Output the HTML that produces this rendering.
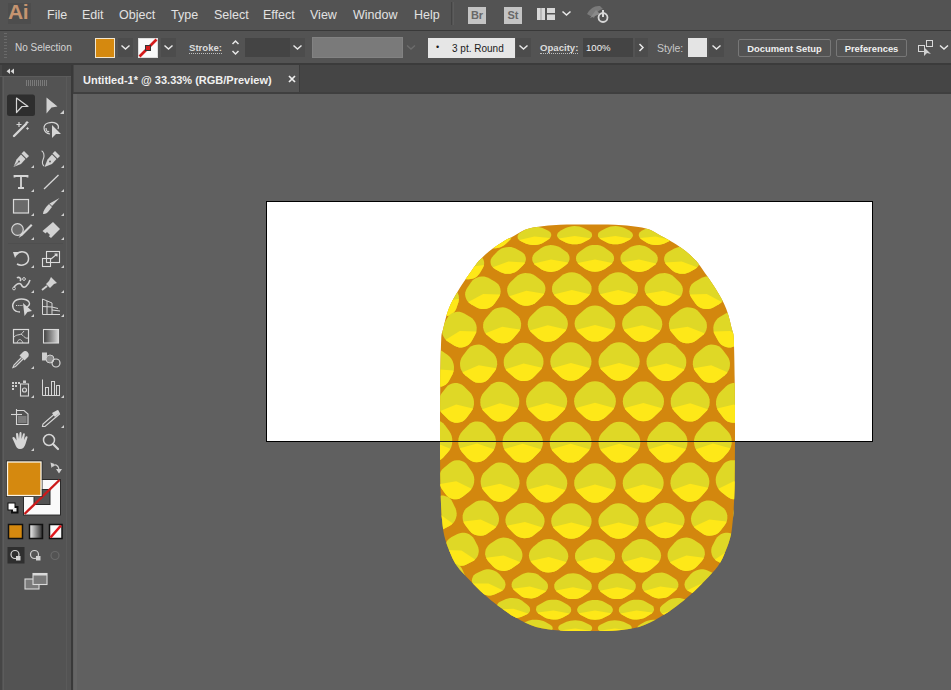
<!DOCTYPE html>
<html><head><meta charset="utf-8">
<style>
*{box-sizing:border-box}
html,body{margin:0;padding:0;width:951px;height:690px;overflow:hidden;background:#5f5f5f;font-family:"Liberation Sans",sans-serif}
.abs{position:absolute}
#menubar{left:0;top:0;width:951px;height:30px;background:#535353}
#mbline{left:0;top:30px;width:951px;height:1px;background:#393939}
#ctrl{left:0;top:31px;width:951px;height:32px;background:#535353}
#ctline{left:0;top:63px;width:951px;height:2px;background:#3b3b3b}
#tabbar{left:73px;top:65px;width:878px;height:28px;background:#454545}
#tab{left:74px;top:65px;width:226px;height:27px;background:#535353;border-right:1px solid #3c3c3c}
#tabline{left:73px;top:92px;width:878px;height:2px;background:#3f3f3f}
#tools{left:0;top:65px;width:71px;height:625px;background:#535353}
#toolshead{left:0;top:65px;width:71px;height:12px;background:#3e3e3e}
#sep{left:71px;top:65px;width:2px;height:625px;background:#393939}
#canvas{left:73px;top:94px;width:878px;height:596px;background:#606060}
.menu{top:8px;font-size:12.5px;color:#e2e2e2;white-space:nowrap}
.lbl{font-size:9.6px;font-weight:bold;color:#dcdcdc;white-space:nowrap}
.dk{background:#4c4c4c}
.inp{background:#444444}
.btn{border:1px solid #777;border-radius:2px;background:#535353;font-size:9.4px;font-weight:bold;color:#f0f0f0;text-align:center;white-space:nowrap}
.ul{border-bottom:1px dotted #bdbdbd}
</style></head><body>
<div id="canvas" class="abs"></div>
<div id="menubar" class="abs"></div>
<div id="mbline" class="abs"></div>
<div id="ctrl" class="abs"></div>
<div id="ctline" class="abs"></div>
<div id="tabbar" class="abs"></div>
<div id="tab" class="abs"></div>
<div id="tabline" class="abs"></div>
<div id="tools" class="abs"></div>
<div id="toolshead" class="abs"></div>
<div id="sep" class="abs"></div>
<div class="abs" style="left:74px;top:94px;width:3px;height:596px;background:#656565"></div>

<!-- menu -->
<div class="abs" style="left:8px;top:3px;width:23px;height:21px;background:#4d4d4d"></div><div class="abs" style="left:8px;top:0px;font-size:21px;line-height:24px;font-weight:bold;color:#c59470;letter-spacing:-0.5px">Ai</div>
<div class="abs menu" style="left:47px">File</div>
<div class="abs menu" style="left:82px">Edit</div>
<div class="abs menu" style="left:119px">Object</div>
<div class="abs menu" style="left:171px">Type</div>
<div class="abs menu" style="left:214px">Select</div>
<div class="abs menu" style="left:263px">Effect</div>
<div class="abs menu" style="left:310px">View</div>
<div class="abs menu" style="left:353px">Window</div>
<div class="abs menu" style="left:414px">Help</div>
<div class="abs" style="left:451px;top:2px;width:1px;height:23px;background:#444"></div><div class="abs" style="left:453px;top:2px;width:1px;height:23px;background:#5c5c5c"></div>
<div class="abs" style="left:468px;top:7px;width:18px;height:17px;background:#c4c4c4;color:#686868;font-size:11px;font-weight:bold;text-align:center;line-height:17px">Br</div>
<div class="abs" style="left:504px;top:7px;width:18px;height:17px;background:#c4c4c4;color:#686868;font-size:11px;font-weight:bold;text-align:center;line-height:17px">St</div>
<svg class="abs" style="left:530px;top:0" width="90" height="30" viewBox="530 0 90 30">
 <rect x="537" y="8" width="8" height="12" fill="#d8d8d8"/>
 <rect x="540.5" y="8" width="1" height="12" fill="#9a9a9a"/>
 <rect x="547" y="8" width="8" height="5" fill="#d8d8d8"/>
 <rect x="547" y="14.5" width="8" height="5.5" fill="#d8d8d8"/>
 <path d="M562.5,11.5 L566.5,15 L570.5,11.5" stroke="#e8e8e8" stroke-width="1.6" fill="none"/>
 <path d="M587,14 Q592,5 600,6 L603,9 Q597,10 594,18 Z" fill="#7a7a7a"/>
 <path d="M590,18 L596,10 L600,14 Z" fill="#8a8a8a"/>
 <circle cx="603" cy="17.5" r="4.5" stroke="#d8d8d8" stroke-width="1.8" fill="none"/>
 <rect x="602" y="10" width="2" height="7" fill="#d8d8d8"/>
</svg>

<!-- control bar -->
<svg class="abs" style="left:0;top:31px" width="10" height="32"><g fill="#6a6a6a"><rect x="4" y="2" width="3" height="1"/><rect x="4" y="5" width="3" height="1"/><rect x="4" y="8" width="3" height="1"/><rect x="4" y="11" width="3" height="1"/><rect x="4" y="14" width="3" height="1"/><rect x="4" y="17" width="3" height="1"/><rect x="4" y="20" width="3" height="1"/><rect x="4" y="23" width="3" height="1"/><rect x="4" y="26" width="3" height="1"/></g></svg>
<div class="abs" style="left:15px;top:42px;font-size:10px;color:#d4d4d4;white-space:nowrap">No Selection</div>
<div class="abs" style="left:95px;top:38px;width:20px;height:20px;background:#d5890f;border:1px solid #f2e6cf"></div>
<div class="abs dk" style="left:118px;top:38px;width:15px;height:19px"></div>
<div class="abs" style="left:138px;top:38px;width:20px;height:20px;background:#fafafa;border:1px solid #ddd"></div>
<svg class="abs" style="left:138px;top:38px" width="20" height="20"><path d="M1.5,18.5 L18.5,1.5" stroke="#d41b1b" stroke-width="2.6"/><rect x="7.5" y="7.5" width="5" height="5" fill="#d41b1b" stroke="#333" stroke-width="1"/></svg>
<div class="abs dk" style="left:161px;top:38px;width:15px;height:19px"></div>
<div class="abs lbl ul" style="left:189px;top:42px;line-height:11px">Stroke:</div>
<div class="abs inp" style="left:245px;top:38px;width:45px;height:19px"></div>
<div class="abs dk" style="left:290px;top:38px;width:15px;height:19px"></div>
<div class="abs" style="left:312px;top:37px;width:91px;height:21px;background:#7a7a7a;border:1px solid #828282"></div>
<div class="abs" style="left:428px;top:38px;width:87px;height:20px;background:#e6e6e6;font-size:10px;color:#1a1a1a;white-space:nowrap;line-height:21px"><span style="position:absolute;left:8px;top:-1px;font-size:9px">&#8226;</span><span style="position:absolute;left:24px">3 pt. Round</span></div>
<div class="abs dk" style="left:516px;top:38px;width:15px;height:19px"></div>
<div class="abs lbl ul" style="left:540px;top:42px;line-height:11px">Opacity:</div>
<div class="abs inp" style="left:583px;top:38px;width:50px;height:19px;font-size:9.6px;color:#f0f0f0;line-height:19px;padding-left:3px">100%</div>
<div class="abs dk" style="left:635px;top:38px;width:13px;height:19px"></div>
<div class="abs" style="left:657px;top:42px;font-size:10.5px;color:#c8c8c8;white-space:nowrap">Style:</div>
<div class="abs" style="left:688px;top:38px;width:19px;height:19px;background:#e4e4e4"></div>
<div class="abs dk" style="left:709px;top:38px;width:15px;height:19px"></div>
<div class="abs btn" style="left:738px;top:39px;width:93px;height:18px;line-height:17px">Document Setup</div>
<div class="abs btn" style="left:836px;top:39px;width:71px;height:18px;line-height:17px">Preferences</div>
<svg class="abs" style="left:0;top:31px" width="951" height="32" viewBox="0 31 951 32">
 <g stroke="#e8e8e8" stroke-width="1.5" fill="none">
  <path d="M121.5,45.5 L125.5,49 L129.5,45.5"/>
  <path d="M164.5,45.5 L168.5,49 L172.5,45.5"/>
  <path d="M293.5,45.5 L297.5,49 L301.5,45.5"/>
  <path d="M519.5,45.5 L523.5,49 L527.5,45.5"/>
  <path d="M712.5,45.5 L716.5,49 L720.5,45.5"/>
  <path d="M940,45.5 L944,49 L948,45.5"/>
  <path d="M639.5,44 L643,47.5 L639.5,51"/>
  <path d="M232.5,44 L235.5,41 L238.5,44"/>
  <path d="M232.5,51 L235.5,54 L238.5,51"/>
 </g>
 <path d="M407,45.5 L411,49 L415,45.5" stroke="#6c6c6c" stroke-width="1.5" fill="none"/>
 <g stroke="#d8d8d8" stroke-width="1" fill="none">
  <rect x="918.5" y="45.5" width="6" height="6"/>
  <rect x="926.5" y="40.5" width="6" height="6"/>
 </g>
 <path d="M924,47 L924,56 L927,53 L931,54 Z" fill="#cfcfcf"/>
</svg>

<!-- tab -->
<div class="abs" style="left:83px;top:74px;font-size:11px;font-weight:bold;color:#f0f0f0;white-space:nowrap">Untitled-1* @ 33.33% (RGB/Preview)</div>
<svg class="abs" style="left:287px;top:74px" width="10" height="10"><path d="M2,2 L8,8 M8,2 L2,8" stroke="#eeeeee" stroke-width="1.7"/></svg>

<svg class="abs" style="left:0;top:0" width="73" height="690" viewBox="0 0 73 690">
 <!-- panel borders -->
 <rect x="0" y="65" width="2" height="625" fill="#464646"/>
 <rect x="3" y="77" width="1" height="613" fill="#5c5c5c"/>
 <rect x="66" y="77" width="1" height="613" fill="#5a5a5a"/>
 <rect x="0" y="76" width="71" height="1" fill="#5c5c5c"/>
 <!-- header -->
 <path d="M10,68.5 L6.5,71.2 L10,74 Z M14,68.5 L10.5,71.2 L14,74 Z" fill="#d8d8d8"/>
 <!-- grip -->
 <g fill="#7a7a7a">
  <rect x="26" y="80" width="1" height="6"/><rect x="28" y="80" width="1" height="6"/><rect x="30" y="80" width="1" height="6"/><rect x="32" y="80" width="1" height="6"/><rect x="34" y="80" width="1" height="6"/><rect x="36" y="80" width="1" height="6"/><rect x="38" y="80" width="1" height="6"/><rect x="40" y="80" width="1" height="6"/><rect x="42" y="80" width="1" height="6"/><rect x="44" y="80" width="1" height="6"/><rect x="46" y="80" width="1" height="6"/>
 </g>
 <!-- active selection bg -->
 <rect x="7" y="94.5" width="28" height="21.5" rx="2.5" fill="#2e2e2e"/>
 <g fill="none" stroke="#d6d6d6" stroke-width="1.2" stroke-linejoin="round">
  <!-- selection -->
  <path d="M16.5,98 L28,106.5 L22,106.5 L16.5,112.5 Z"/>
 </g>
 <!-- direct selection -->
 <path d="M46.5,97.5 L57.5,106.5 L51.5,107.5 L46.5,113.5 Z" fill="#d2d2d2"/>
 <g fill="#cfcfcf">
  <!-- more-tools triangles -->
  <path d="M64,110 L64,114 L60,114 Z"/>
  <path d="M34,165 L34,168 L31,168 Z"/><path d="M64,165 L64,168 L61,168 Z"/>
  <path d="M34,189 L34,192 L31,192 Z"/><path d="M64,189 L64,192 L61,192 Z"/>
  <path d="M34,213 L34,216 L31,216 Z"/><path d="M64,213 L64,216 L61,216 Z"/>
  <path d="M34,237 L34,240 L31,240 Z"/><path d="M64,237 L64,240 L61,240 Z"/>
  <path d="M34,265 L34,268 L31,268 Z"/><path d="M64,265 L64,268 L61,268 Z"/>
  <path d="M34,290 L34,293 L31,293 Z"/><path d="M64,290 L64,293 L61,293 Z"/>
  <path d="M34,314 L34,317 L31,317 Z"/><path d="M64,314 L64,317 L61,317 Z"/>
  <path d="M34,366 L34,369 L31,369 Z"/>
  <path d="M34,395 L34,398 L31,398 Z"/><path d="M64,395 L64,398 L61,398 Z"/>
  <path d="M64,425 L64,428 L61,428 Z"/>
  <path d="M34,448 L34,451 L31,451 Z"/>
 </g>
 <!-- magic wand -->
 <g stroke="#d6d6d6" fill="none">
  <path d="M14,136 L26,124" stroke-width="2.4" stroke-linecap="round"/>
  <path d="M19,122 L19,127 M16.5,124.5 L21.5,124.5" stroke-width="1.2"/>
  <path d="M27,121 L27,124 M25.5,122.5 L28.5,122.5" stroke-width="1"/>
  <circle cx="27.5" cy="128.5" r="0.8" fill="#d6d6d6"/>
 </g>
 <!-- lasso -->
 <g stroke="#d6d6d6" fill="none" stroke-width="1.2">
  <path d="M50,134 C43,133 42,125 48,123 C54,121 60,124 58,129"/>
  <path d="M46,128 C46,131 48,133 49,131"/>
 </g>
 <path d="M52,125 L61,134 L56,134 L52,138 Z" fill="#d6d6d6"/>
 <!-- pen -->
 <g fill="#d2d2d2">
  <path d="M24,151 L29,156 L26.5,158.5 L21.5,153.5 Z"/>
  <path d="M21,154.5 L25.5,159 L21,164 L13.5,167 L16.5,159.5 Z"/>
 </g>
 <circle cx="19" cy="161.5" r="0.9" fill="#535353"/>
 <path d="M14,166.5 L18.5,162" stroke="#535353" stroke-width="0.8"/>
 <!-- curvature pen -->
 <g fill="#d2d2d2">
  <path d="M55,151 L60,156 L57.5,158.5 L52.5,153.5 Z"/>
  <path d="M52,154.5 L56.5,159 L52,164 L44.5,167 L47.5,159.5 Z"/>
 </g>
 <circle cx="50" cy="161.5" r="0.9" fill="#535353"/>
 <path d="M44,166 C40,162 44,160 44,156 C44,152 42,151 41.5,151" stroke="#d2d2d2" stroke-width="1.1" fill="none"/>
 <!-- type -->
 <path d="M14.5,177.5 L14.5,176 L27.5,176 L27.5,177.5 M21,176 L21,188 M18,188 L24,188" stroke="#d6d6d6" stroke-width="1.8" fill="none"/>
 <!-- line -->
 <path d="M44,189 L58.5,175" stroke="#d6d6d6" stroke-width="1.3"/>
 <!-- rectangle -->
 <rect x="13.5" y="199.5" width="15" height="13.5" fill="#6a6a6a" stroke="#dadada" stroke-width="1.2"/>
 <!-- paintbrush -->
 <path d="M59.5,198 L52,206 L49.5,203.5 Z" fill="#d2d2d2"/>
 <path d="M49,204 L52,207 L48,212 C46,214 44,214 43,214 C43,211 45,208 49,204 Z" fill="#d2d2d2"/>
 <!-- shaper -->
 <circle cx="17.5" cy="229.5" r="5.8" fill="#6a6a6a" stroke="#d6d6d6" stroke-width="1.2"/>
 <path d="M31,224 L21,234 L18.5,238 L22.5,235.5 L32.5,225.5 Z" fill="#d6d6d6"/>
 <!-- eraser -->
 <path d="M53,222 L60,229 L51,238 L42.5,231 Z" fill="#d2d2d2"/>
 <path d="M47,232 L50,235 L48,237 L45,234 Z" fill="#535353"/>
 <!-- separator -->
 <rect x="8" y="243" width="55" height="1" fill="#4e4e4e"/>
 <!-- rotate -->
 <path d="M16,255 C20,250 28,251 28.5,258 C29,264 22,267 17,264" stroke="#d6d6d6" stroke-width="1.5" fill="none"/>
 <path d="M13,252 L18.5,252 L15,258 Z" fill="#d6d6d6"/>
 <!-- scale -->
 <g stroke="#dcdcdc" stroke-width="1.1" fill="none">
  <rect x="46.5" y="251.5" width="13" height="11"/>
  <rect x="42.5" y="258.5" width="8" height="8"/>
  <path d="M51,259 L57,254 M54.5,254 L57,254 L57,256.5"/>
 </g>
 <!-- width tool -->
 <g stroke="#d2d2d2" stroke-width="1.6" fill="none">
  <path d="M14,287 C18,282 21,283 22,286 C24,289 28,286 30,280"/>
  <path d="M17,278 C19,276 22,279 20,281"/>
 </g>
 <circle cx="14" cy="288.5" r="1.4" stroke="#d2d2d2" stroke-width="1" fill="none"/>
 <circle cx="24" cy="279" r="1.4" stroke="#d2d2d2" stroke-width="1" fill="none"/>
 <!-- puppet pin -->
 <path d="M51,277 L57,283 L54,284 L50,288 L46,284 L49,281 Z" fill="#d2d2d2"/>
 <path d="M47,286 L42,290" stroke="#d2d2d2" stroke-width="1.8"/>
 <!-- shape builder -->
 <path d="M20,312 C13,312 11,306 14,302 C17,298 26,298 29,302 C31,305 27,307 25,308" stroke="#d6d6d6" stroke-width="1.3" fill="none"/>
 <path d="M16,305.5 L23,305.5" stroke="#d6d6d6" stroke-width="1.2" stroke-dasharray="1.2,1"/>
 <path d="M23,303 L32,311 L27.5,312 L24.5,316 Z" fill="#d6d6d6"/>
 <!-- perspective grid -->
 <g stroke="#d6d6d6" stroke-width="1" fill="none">
  <path d="M42.5,299 L42.5,314.5 L60,314.5"/>
  <path d="M42.5,299 L52,303 L52,314.5 M42.5,306.5 L52,307 M47,301 L47,314.5"/>
  <path d="M52,310 L60,311 M52,307 L58,308.5"/>
 </g>
 <!-- mesh -->
 <rect x="13.5" y="329.5" width="15" height="13.5" fill="none" stroke="#dadada" stroke-width="1.2"/>
 <path d="M14,337 C18,333 20,337 24,331 M17,343 C18,339 21,338 23,343 M21,334 C24,336 25,339 28,338" stroke="#d0d0d0" stroke-width="1" fill="none"/>
 <!-- gradient -->
 <defs><linearGradient id="gg" x1="0" x2="1"><stop offset="0" stop-color="#3e3e3e"/><stop offset="1" stop-color="#d8d8d8"/></linearGradient>
 <linearGradient id="gb" x1="0" x2="1"><stop offset="0" stop-color="#f4f4f4"/><stop offset="1" stop-color="#2a2a2a"/></linearGradient></defs>
 <rect x="43.5" y="329.5" width="15" height="13.5" fill="url(#gg)" stroke="#dadada" stroke-width="1.1"/>
 <!-- eyedropper -->
 <path d="M27.5,352 C29.5,354 29,356 27.5,357.5 L24.5,360.5 L19.5,355.5 L22.5,352.5 C24,351 26,350.5 27.5,352 Z" fill="#d2d2d2"/>
 <path d="M21.5,357.5 L14,365 L13,367.5 L15.5,366.5 L23,359" stroke="#d2d2d2" stroke-width="1.2" fill="none"/>
 <!-- blend -->
 <rect x="42" y="352.5" width="5" height="8" fill="#cfcfcf"/>
 <circle cx="50" cy="359" r="4" fill="#8a8a8a" stroke="#cfcfcf" stroke-width="1"/>
 <circle cx="56" cy="363" r="4" fill="none" stroke="#d8d8d8" stroke-width="1.2"/>
 <!-- symbol sprayer -->
 <g fill="#cfcfcf">
  <rect x="12" y="382" width="2" height="2"/><rect x="15" y="382" width="2" height="2"/><rect x="18" y="382" width="2" height="2"/>
  <rect x="12" y="385" width="2" height="2"/><rect x="15" y="385" width="2" height="2"/>
  <rect x="12" y="388" width="2" height="2"/>
  <rect x="23" y="380.5" width="3" height="2.5"/>
 </g>
 <rect x="20.5" y="384" width="8" height="12" fill="none" stroke="#d6d6d6" stroke-width="1.1"/>
 <circle cx="24.5" cy="390" r="2" fill="none" stroke="#d6d6d6" stroke-width="1.2"/>
 <!-- graph -->
 <path d="M42.5,379.5 L42.5,395.5 L60,395.5" stroke="#d6d6d6" stroke-width="1" fill="none"/>
 <g fill="none" stroke="#d6d6d6" stroke-width="1"><rect x="45.5" y="387.5" width="3" height="8"/><rect x="51.5" y="381.5" width="3" height="14"/><rect x="56.5" y="385.5" width="3" height="10"/></g>
 <!-- artboard -->
 <g stroke="#d6d6d6" stroke-width="1.1" fill="none">
  <path d="M16.5,409 L16.5,424.5 L28,424.5 L28,414 L24,410.5 L16.5,410.5"/>
  <path d="M11,414.5 L22,414.5"/>
 </g>
 <path d="M18,416 L26.5,416 L26.5,423 L18,423 Z" fill="#7c7c7c"/>
 <!-- slice/knife -->
 <path d="M58,411 L59.5,414 L45,426.5 L42.5,426.5 L43,424 Z" fill="none" stroke="#d6d6d6" stroke-width="1.2"/>
 <path d="M52,413 L57.5,410 L59.5,413 L55,417 Z" fill="#d6d6d6"/>
 <!-- hand -->
 <path d="M15,444 L12.5,438.5 C12,437 14,436.5 15,438 L16.5,440.5 L16,434 C16,432.5 18,432.5 18.2,434 L19,439 L19.5,433 C19.7,431.5 21.5,431.5 21.5,433 L21.5,439 L23,434 C23.3,432.7 25,433 24.8,434.5 L24,440 L25.5,437 C26,435.8 27.8,436.2 27.5,437.5 L25.5,444 C24.5,447 23,449 20,449 C17.5,449 16,447 15,444 Z" fill="#d6d6d6"/>
 <!-- zoom -->
 <circle cx="49" cy="440" r="5.5" fill="none" stroke="#d6d6d6" stroke-width="1.5"/>
 <path d="M53,444 L58,449" stroke="#d6d6d6" stroke-width="2.2" stroke-linecap="round"/>
 <!-- fill & stroke -->
 <rect x="23.5" y="479.5" width="37" height="35.5" fill="none" stroke="#2a2a2a" stroke-width="1"/>
 <path d="M24,480 L60,480 L60,514.5 L24,514.5 Z M34,489.5 L34,504.5 L50,504.5 L50,489.5 Z" fill="#fafafa" fill-rule="evenodd"/>
 <rect x="34" y="489.5" width="16" height="15" fill="none" stroke="#2a2a2a" stroke-width="1"/>
 <path d="M24.5,514 L59.5,480" stroke="#cc1a1a" stroke-width="2.4"/>
 <rect x="6.5" y="461" width="35.5" height="35.5" fill="none" stroke="#2a2a2a" stroke-width="1"/>
 <rect x="7.5" y="462" width="33.5" height="33.5" fill="#d5890f" stroke="#fbf3e3" stroke-width="1.3"/>
 <path d="M52.5,466.5 C55,463.5 58,465 59,469" stroke="#d0d0d0" stroke-width="1.2" fill="none"/>
 <path d="M50.5,462.5 L54.5,464 L51.5,468 Z M56,469 L62,469 L59,473.5 Z" fill="#d0d0d0"/>
 <rect x="11.5" y="506.5" width="6.5" height="6.5" fill="#111" stroke="#111" stroke-width="1"/>
 <rect x="8" y="503" width="7" height="7" fill="#fff" stroke="#111" stroke-width="1"/>
 <rect x="13" y="508" width="3.5" height="3.5" fill="#eee"/>
 <!-- color/gradient/none -->
 <rect x="8.5" y="524.5" width="14" height="14" fill="#d5890f" stroke="#111" stroke-width="1.5"/>
 <rect x="29.5" y="524.5" width="13" height="14" fill="url(#gb)" stroke="#111" stroke-width="1.5"/>
 <rect x="49.5" y="524.5" width="12.5" height="14" fill="#fafafa" stroke="#111" stroke-width="1.5"/>
 <path d="M50.5,537.5 L61,525.5" stroke="#e0161b" stroke-width="2.6"/>
 <!-- draw modes -->
 <rect x="7.5" y="547" width="17" height="16.5" fill="#2f2f2f"/>
 <circle cx="15" cy="554.5" r="4" fill="none" stroke="#d6d6d6" stroke-width="1.2"/>
 <rect x="16" y="556" width="4.5" height="4.5" fill="#d6d6d6"/>
 <circle cx="34.5" cy="554.5" r="4" fill="none" stroke="#d0d0d0" stroke-width="1.2"/>
 <rect x="36" y="556" width="4.5" height="4.5" fill="#d0d0d0"/>
 <circle cx="55" cy="555.5" r="4" fill="none" stroke="#6a6a6a" stroke-width="1.2"/>
 <!-- screen mode -->
 <rect x="25" y="579" width="14" height="10" fill="#7a7a7a" stroke="#dadada" stroke-width="1.1"/>
 <rect x="33" y="573.5" width="14" height="11" fill="#7a7a7a" stroke="#dadada" stroke-width="1.1"/>
 <rect x="33" y="573.5" width="14" height="2" fill="#dadada"/>
</svg>


<!-- artboard -->
<div class="abs" style="left:266px;top:201px;width:607px;height:241px;background:#fff;border:1px solid #000"></div>

<svg class="abs" style="left:0;top:0" width="951" height="690" viewBox="0 0 951 690">
<defs>
<clipPath id="shp"><path d="M587.5,224.5C596.7,224.5 605.4,224.2 615.0,224.8C624.6,225.4 637.4,226.4 645.0,228.2C652.6,230.0 656.0,233.3 660.8,235.7C665.5,238.1 669.3,240.1 673.5,242.7C677.7,245.3 682.4,248.6 686.1,251.5C689.8,254.4 693.4,258.1 695.5,260.3C697.6,262.5 695.6,259.8 699.0,264.6C702.4,269.4 711.3,281.6 715.8,289.0C720.3,296.4 723.5,301.9 726.2,308.7C728.9,315.5 730.7,324.4 732.0,329.6C733.3,334.8 733.3,331.6 733.8,340.0C734.2,348.4 734.5,365.0 734.7,380.0C734.9,395.0 735.0,413.3 735.0,430.0C735.0,446.7 734.9,466.7 734.7,480.0C734.5,493.3 734.0,503.3 733.7,510.0C733.4,516.7 733.3,516.0 732.8,520.3C732.3,524.5 732.0,530.4 730.8,535.5C729.6,540.6 727.8,545.7 725.7,550.8C723.6,555.9 721.5,561.0 718.0,566.0C714.5,571.0 709.5,575.8 705.0,580.5C700.5,585.2 695.7,590.0 691.0,594.3C686.3,598.5 682.0,602.1 676.7,606.0C671.4,609.9 665.6,614.1 659.3,617.6C653.0,621.1 646.4,624.9 639.0,627.0C631.6,629.1 623.6,629.8 615.0,630.5C606.4,631.2 596.7,631.0 587.5,631.0C578.3,631.0 568.6,631.2 560.0,630.5C551.4,629.8 543.4,629.1 536.0,627.0C528.6,624.9 522.0,621.1 515.7,617.6C509.4,614.1 503.6,609.9 498.3,606.0C493.0,602.1 488.7,598.5 484.0,594.3C479.3,590.0 474.5,585.2 470.0,580.5C465.5,575.8 460.4,571.0 457.0,566.0C453.6,561.0 451.4,555.9 449.3,550.8C447.2,545.7 445.4,540.6 444.2,535.5C443.0,530.4 442.7,524.5 442.2,520.3C441.7,516.0 441.6,516.7 441.3,510.0C441.0,503.3 440.5,493.3 440.3,480.0C440.1,466.7 440.0,446.7 440.0,430.0C440.0,413.3 440.1,395.0 440.3,380.0C440.5,365.0 440.8,348.4 441.2,340.0C441.6,331.6 441.7,334.8 443.0,329.6C444.3,324.4 446.1,315.5 448.8,308.7C451.5,301.9 454.7,296.4 459.2,289.0C463.7,281.6 472.6,269.4 476.0,264.6C479.4,259.8 477.4,262.5 479.5,260.3C481.6,258.1 485.2,254.4 488.9,251.5C492.6,248.6 497.3,245.3 501.5,242.7C505.7,240.1 509.5,238.1 514.2,235.7C519.0,233.3 522.4,230.0 530.0,228.2C537.6,226.4 550.4,225.4 560.0,224.8C569.6,224.2 578.3,224.5 587.5,224.5Z"/></clipPath>
<path id="t" d="M-0.477,-0.823Q-0.300,-1.000 -0.050,-1.000L0.050,-1.000Q0.300,-1.000 0.477,-0.823L0.823,-0.477Q1.000,-0.300 1.000,-0.050L1.000,0.050Q1.000,0.300 0.823,0.477L0.477,0.823Q0.300,1.000 0.050,1.000L-0.050,1.000Q-0.300,1.000 -0.477,0.823L-0.823,0.477Q-1.000,0.300 -1.000,0.050L-1.000,-0.050Q-1.000,-0.300 -0.823,-0.477Z" fill="#dfd826"/>
<clipPath id="lc" clipPathUnits="userSpaceOnUse"><path d="M-2,2 L-2,0.660 L0,0.08 L2,0.660 L2,2Z"/></clipPath>
<g id="tl"><path d="M-0.477,-0.823Q-0.300,-1.000 -0.050,-1.000L0.050,-1.000Q0.300,-1.000 0.477,-0.823L0.823,-0.477Q1.000,-0.300 1.000,-0.050L1.000,0.050Q1.000,0.300 0.823,0.477L0.477,0.823Q0.300,1.000 0.050,1.000L-0.050,1.000Q-0.300,1.000 -0.477,0.823L-0.823,0.477Q-1.000,0.300 -1.000,0.050L-1.000,-0.050Q-1.000,-0.300 -0.823,-0.477Z" fill="#dfd826"/><path d="M-0.477,-0.823Q-0.300,-1.000 -0.050,-1.000L0.050,-1.000Q0.300,-1.000 0.477,-0.823L0.823,-0.477Q1.000,-0.300 1.000,-0.050L1.000,0.050Q1.000,0.300 0.823,0.477L0.477,0.823Q0.300,1.000 0.050,1.000L-0.050,1.000Q-0.300,1.000 -0.477,0.823L-0.823,0.477Q-1.000,0.300 -1.000,0.050L-1.000,-0.050Q-1.000,-0.300 -0.823,-0.477Z" fill="#fee818" clip-path="url(#lc)"/></g>
</defs>
<path d="M587.5,224.5C596.7,224.5 605.4,224.2 615.0,224.8C624.6,225.4 637.4,226.4 645.0,228.2C652.6,230.0 656.0,233.3 660.8,235.7C665.5,238.1 669.3,240.1 673.5,242.7C677.7,245.3 682.4,248.6 686.1,251.5C689.8,254.4 693.4,258.1 695.5,260.3C697.6,262.5 695.6,259.8 699.0,264.6C702.4,269.4 711.3,281.6 715.8,289.0C720.3,296.4 723.5,301.9 726.2,308.7C728.9,315.5 730.7,324.4 732.0,329.6C733.3,334.8 733.3,331.6 733.8,340.0C734.2,348.4 734.5,365.0 734.7,380.0C734.9,395.0 735.0,413.3 735.0,430.0C735.0,446.7 734.9,466.7 734.7,480.0C734.5,493.3 734.0,503.3 733.7,510.0C733.4,516.7 733.3,516.0 732.8,520.3C732.3,524.5 732.0,530.4 730.8,535.5C729.6,540.6 727.8,545.7 725.7,550.8C723.6,555.9 721.5,561.0 718.0,566.0C714.5,571.0 709.5,575.8 705.0,580.5C700.5,585.2 695.7,590.0 691.0,594.3C686.3,598.5 682.0,602.1 676.7,606.0C671.4,609.9 665.6,614.1 659.3,617.6C653.0,621.1 646.4,624.9 639.0,627.0C631.6,629.1 623.6,629.8 615.0,630.5C606.4,631.2 596.7,631.0 587.5,631.0C578.3,631.0 568.6,631.2 560.0,630.5C551.4,629.8 543.4,629.1 536.0,627.0C528.6,624.9 522.0,621.1 515.7,617.6C509.4,614.1 503.6,609.9 498.3,606.0C493.0,602.1 488.7,598.5 484.0,594.3C479.3,590.0 474.5,585.2 470.0,580.5C465.5,575.8 460.4,571.0 457.0,566.0C453.6,561.0 451.4,555.9 449.3,550.8C447.2,545.7 445.4,540.6 444.2,535.5C443.0,530.4 442.7,524.5 442.2,520.3C441.7,516.0 441.6,516.7 441.3,510.0C441.0,503.3 440.5,493.3 440.3,480.0C440.1,466.7 440.0,446.7 440.0,430.0C440.0,413.3 440.1,395.0 440.3,380.0C440.5,365.0 440.8,348.4 441.2,340.0C441.6,331.6 441.7,334.8 443.0,329.6C444.3,324.4 446.1,315.5 448.8,308.7C451.5,301.9 454.7,296.4 459.2,289.0C463.7,281.6 472.6,269.4 476.0,264.6C479.4,259.8 477.4,262.5 479.5,260.3C481.6,258.1 485.2,254.4 488.9,251.5C492.6,248.6 497.3,245.3 501.5,242.7C505.7,240.1 509.5,238.1 514.2,235.7C519.0,233.3 522.4,230.0 530.0,228.2C537.6,226.4 550.4,225.4 560.0,224.8C569.6,224.2 578.3,224.5 587.5,224.5Z" fill="#d3870e"/>
<g clip-path="url(#shp)">
<g transform="translate(430.5,256.3) rotate(-42.4)"><path d="M-6.2,-7.2L-4.8,-8.0L-3.4,-8.6L-1.7,-9.0L0.0,-9.1L0.0,-9.1L1.7,-9.0L3.4,-8.6L4.8,-8.0L6.2,-7.2L9.5,-4.7L10.6,-3.6L11.4,-2.5L11.9,-1.3L12.1,0.0L12.1,0.0L11.9,1.3L11.4,2.5L10.6,3.6L9.5,4.7L6.2,7.2L4.8,8.0L3.4,8.6L1.7,9.0L0.0,9.1L0.0,9.1L-1.7,9.0L-3.4,8.6L-4.8,8.0L-6.2,7.2L-9.5,4.7L-10.6,3.6L-11.4,2.5L-11.9,1.3L-12.1,0.0L-12.1,0.0L-11.9,-1.3L-11.4,-2.5L-10.6,-3.6L-9.5,-4.7Z" fill="#dfd826"/><path d="M11.0,3.1L10.6,3.6L9.5,4.7L6.2,7.2L4.8,8.0L3.4,8.6L1.7,9.0L0.0,9.1L0.0,9.1L-1.7,9.0L-3.4,8.6L-4.8,8.0L-6.2,7.2L-9.5,4.7L-10.6,3.6L-11.0,3.1L0.0,0.7Z" fill="#fee818"/></g>
<g transform="translate(461.1,245.7) rotate(-26.8)"><path d="M-7.3,-7.2L-5.7,-8.0L-3.9,-8.6L-2.0,-9.0L0.0,-9.1L0.0,-9.1L2.0,-9.0L3.9,-8.6L5.7,-8.0L7.3,-7.2L11.2,-4.7L12.5,-3.6L13.4,-2.5L14.0,-1.3L14.2,0.0L14.2,0.0L14.0,1.3L13.4,2.5L12.5,3.6L11.2,4.7L7.3,7.2L5.7,8.0L3.9,8.6L2.0,9.0L0.0,9.1L0.0,9.1L-2.0,9.0L-3.9,8.6L-5.7,8.0L-7.3,7.2L-11.2,4.7L-12.5,3.6L-13.4,2.5L-14.0,1.3L-14.2,0.0L-14.2,0.0L-14.0,-1.3L-13.4,-2.5L-12.5,-3.6L-11.2,-4.7Z" fill="#dfd826"/><path d="M12.9,3.1L12.5,3.6L11.2,4.7L7.3,7.2L5.7,8.0L3.9,8.6L2.0,9.0L0.0,9.1L0.0,9.1L-2.0,9.0L-3.9,8.6L-5.7,8.0L-7.3,7.2L-11.2,4.7L-12.5,3.6L-12.9,3.1L0.0,0.7Z" fill="#fee818"/></g>
<g transform="translate(496.1,238.9) rotate(-13.2)"><path d="M-8.1,-7.2L-6.3,-8.0L-4.4,-8.6L-2.3,-9.0L0.0,-9.1L0.0,-9.1L2.3,-9.0L4.4,-8.6L6.3,-8.0L8.1,-7.2L12.5,-4.7L13.9,-3.6L15.0,-2.5L15.6,-1.3L15.8,0.0L15.8,0.0L15.6,1.3L15.0,2.5L13.9,3.6L12.5,4.7L8.1,7.2L6.3,8.0L4.4,8.6L2.3,9.0L0.0,9.1L0.0,9.1L-2.3,9.0L-4.4,8.6L-6.3,8.0L-8.1,7.2L-12.5,4.7L-13.9,3.6L-15.0,2.5L-15.6,1.3L-15.8,0.0L-15.8,0.0L-15.6,-1.3L-15.0,-2.5L-13.9,-3.6L-12.5,-4.7Z" fill="#dfd826"/><path d="M14.4,3.1L13.9,3.6L12.5,4.7L8.1,7.2L6.3,8.0L4.4,8.6L2.3,9.0L0.0,9.1L0.0,9.1L-2.3,9.0L-4.4,8.6L-6.3,8.0L-8.1,7.2L-12.5,4.7L-13.9,3.6L-14.4,3.1L0.0,0.7Z" fill="#fee818"/></g>
<g transform="translate(534.4,235.9) rotate(-4.1)"><path d="M-8.7,-7.2L-6.8,-8.0L-4.7,-8.6L-2.4,-9.0L0.0,-9.1L0.0,-9.1L2.4,-9.0L4.7,-8.6L6.8,-8.0L8.7,-7.2L13.3,-4.7L14.9,-3.6L16.0,-2.5L16.7,-1.3L16.9,0.0L16.9,0.0L16.7,1.3L16.0,2.5L14.9,3.6L13.3,4.7L8.7,7.2L6.8,8.0L4.7,8.6L2.4,9.0L0.0,9.1L0.0,9.1L-2.4,9.0L-4.7,8.6L-6.8,8.0L-8.7,7.2L-13.3,4.7L-14.9,3.6L-16.0,2.5L-16.7,1.3L-16.9,0.0L-16.9,0.0L-16.7,-1.3L-16.0,-2.5L-14.9,-3.6L-13.3,-4.7Z" fill="#dfd826"/><path d="M15.4,3.1L14.9,3.6L13.3,4.7L8.7,7.2L6.8,8.0L4.7,8.6L2.4,9.0L0.0,9.1L0.0,9.1L-2.4,9.0L-4.7,8.6L-6.8,8.0L-8.7,7.2L-13.3,4.7L-14.9,3.6L-15.4,3.1L0.0,0.7Z" fill="#fee818"/></g>
<g transform="translate(574.6,235.2) rotate(-0.3)"><path d="M-9.0,-7.2L-7.0,-8.0L-4.9,-8.6L-2.5,-9.0L0.0,-9.1L0.0,-9.1L2.5,-9.0L4.9,-8.6L7.0,-8.0L9.0,-7.2L13.8,-4.7L15.4,-3.6L16.6,-2.5L17.3,-1.3L17.5,0.0L17.5,0.0L17.3,1.3L16.6,2.5L15.4,3.6L13.8,4.7L9.0,7.2L7.0,8.0L4.9,8.6L2.5,9.0L0.0,9.1L0.0,9.1L-2.5,9.0L-4.9,8.6L-7.0,8.0L-9.0,7.2L-13.8,4.7L-15.4,3.6L-16.6,2.5L-17.3,1.3L-17.5,0.0L-17.5,0.0L-17.3,-1.3L-16.6,-2.5L-15.4,-3.6L-13.8,-4.7Z" fill="#dfd826"/><path d="M15.9,3.1L15.4,3.6L13.8,4.7L9.0,7.2L7.0,8.0L4.9,8.6L2.5,9.0L0.0,9.1L0.0,9.1L-2.5,9.0L-4.9,8.6L-7.0,8.0L-9.0,7.2L-13.8,4.7L-15.4,3.6L-15.9,3.1L0.0,0.7Z" fill="#fee818"/></g>
<g transform="translate(615.4,235.2) rotate(0.3)"><path d="M-9.0,-7.2L-7.0,-8.0L-4.9,-8.6L-2.5,-9.0L0.0,-9.1L0.0,-9.1L2.5,-9.0L4.9,-8.6L7.0,-8.0L9.0,-7.2L13.8,-4.7L15.4,-3.6L16.6,-2.5L17.3,-1.3L17.5,0.0L17.5,0.0L17.3,1.3L16.6,2.5L15.4,3.6L13.8,4.7L9.0,7.2L7.0,8.0L4.9,8.6L2.5,9.0L0.0,9.1L0.0,9.1L-2.5,9.0L-4.9,8.6L-7.0,8.0L-9.0,7.2L-13.8,4.7L-15.4,3.6L-16.6,2.5L-17.3,1.3L-17.5,0.0L-17.5,0.0L-17.3,-1.3L-16.6,-2.5L-15.4,-3.6L-13.8,-4.7Z" fill="#dfd826"/><path d="M15.9,3.1L15.4,3.6L13.8,4.7L9.0,7.2L7.0,8.0L4.9,8.6L2.5,9.0L0.0,9.1L0.0,9.1L-2.5,9.0L-4.9,8.6L-7.0,8.0L-9.0,7.2L-13.8,4.7L-15.4,3.6L-15.9,3.1L0.0,0.7Z" fill="#fee818"/></g>
<g transform="translate(655.6,235.9) rotate(4.1)"><path d="M-8.7,-7.2L-6.8,-8.0L-4.7,-8.6L-2.4,-9.0L0.0,-9.1L0.0,-9.1L2.4,-9.0L4.7,-8.6L6.8,-8.0L8.7,-7.2L13.3,-4.7L14.9,-3.6L16.0,-2.5L16.7,-1.3L16.9,0.0L16.9,0.0L16.7,1.3L16.0,2.5L14.9,3.6L13.3,4.7L8.7,7.2L6.8,8.0L4.7,8.6L2.4,9.0L0.0,9.1L0.0,9.1L-2.4,9.0L-4.7,8.6L-6.8,8.0L-8.7,7.2L-13.3,4.7L-14.9,3.6L-16.0,2.5L-16.7,1.3L-16.9,0.0L-16.9,0.0L-16.7,-1.3L-16.0,-2.5L-14.9,-3.6L-13.3,-4.7Z" fill="#dfd826"/><path d="M15.4,3.1L14.9,3.6L13.3,4.7L8.7,7.2L6.8,8.0L4.7,8.6L2.4,9.0L0.0,9.1L0.0,9.1L-2.4,9.0L-4.7,8.6L-6.8,8.0L-8.7,7.2L-13.3,4.7L-14.9,3.6L-15.4,3.1L0.0,0.7Z" fill="#fee818"/></g>
<g transform="translate(693.9,238.9) rotate(13.2)"><path d="M-8.1,-7.2L-6.3,-8.0L-4.4,-8.6L-2.3,-9.0L0.0,-9.1L0.0,-9.1L2.3,-9.0L4.4,-8.6L6.3,-8.0L8.1,-7.2L12.5,-4.7L13.9,-3.6L15.0,-2.5L15.6,-1.3L15.8,0.0L15.8,0.0L15.6,1.3L15.0,2.5L13.9,3.6L12.5,4.7L8.1,7.2L6.3,8.0L4.4,8.6L2.3,9.0L0.0,9.1L0.0,9.1L-2.3,9.0L-4.4,8.6L-6.3,8.0L-8.1,7.2L-12.5,4.7L-13.9,3.6L-15.0,2.5L-15.6,1.3L-15.8,0.0L-15.8,0.0L-15.6,-1.3L-15.0,-2.5L-13.9,-3.6L-12.5,-4.7Z" fill="#dfd826"/><path d="M14.4,3.1L13.9,3.6L12.5,4.7L8.1,7.2L6.3,8.0L4.4,8.6L2.3,9.0L0.0,9.1L0.0,9.1L-2.3,9.0L-4.4,8.6L-6.3,8.0L-8.1,7.2L-12.5,4.7L-13.9,3.6L-14.4,3.1L0.0,0.7Z" fill="#fee818"/></g>
<g transform="translate(728.9,245.7) rotate(26.8)"><path d="M-7.3,-7.2L-5.7,-8.0L-3.9,-8.6L-2.0,-9.0L0.0,-9.1L0.0,-9.1L2.0,-9.0L3.9,-8.6L5.7,-8.0L7.3,-7.2L11.2,-4.7L12.5,-3.6L13.4,-2.5L14.0,-1.3L14.2,0.0L14.2,0.0L14.0,1.3L13.4,2.5L12.5,3.6L11.2,4.7L7.3,7.2L5.7,8.0L3.9,8.6L2.0,9.0L0.0,9.1L0.0,9.1L-2.0,9.0L-3.9,8.6L-5.7,8.0L-7.3,7.2L-11.2,4.7L-12.5,3.6L-13.4,2.5L-14.0,1.3L-14.2,0.0L-14.2,0.0L-14.0,-1.3L-13.4,-2.5L-12.5,-3.6L-11.2,-4.7Z" fill="#dfd826"/><path d="M12.9,3.1L12.5,3.6L11.2,4.7L7.3,7.2L5.7,8.0L3.9,8.6L2.0,9.0L0.0,9.1L0.0,9.1L-2.0,9.0L-3.9,8.6L-5.7,8.0L-7.3,7.2L-11.2,4.7L-12.5,3.6L-12.9,3.1L0.0,0.7Z" fill="#fee818"/></g>
<g transform="translate(432.7,276.1) rotate(-36.7)"><path d="M-7.3,-10.6L-5.7,-11.8L-4.0,-12.7L-2.1,-13.2L0.0,-13.4L0.0,-13.4L2.1,-13.2L4.0,-12.7L5.7,-11.8L7.3,-10.6L11.3,-6.9L12.6,-5.4L13.5,-3.7L14.1,-1.9L14.3,0.0L14.3,0.0L14.1,1.9L13.5,3.7L12.6,5.4L11.3,6.9L7.3,10.6L5.7,11.8L4.0,12.7L2.1,13.2L0.0,13.4L0.0,13.4L-2.1,13.2L-4.0,12.7L-5.7,11.8L-7.3,10.6L-11.3,6.9L-12.6,5.4L-13.5,3.7L-14.1,1.9L-14.3,0.0L-14.3,0.0L-14.1,-1.9L-13.5,-3.7L-12.6,-5.4L-11.3,-6.9Z" fill="#dfd826"/><path d="M13.0,4.6L12.6,5.4L11.3,6.9L7.3,10.6L5.7,11.8L4.0,12.7L2.1,13.2L0.0,13.4L0.0,13.4L-2.1,13.2L-4.0,12.7L-5.7,11.8L-7.3,10.6L-11.3,6.9L-12.6,5.4L-13.0,4.6L-0.0,1.1Z" fill="#fee818"/></g>
<g transform="translate(468.4,265.9) rotate(-20.8)"><path d="M-8.4,-10.6L-6.5,-11.8L-4.5,-12.7L-2.4,-13.2L0.0,-13.4L0.0,-13.4L2.4,-13.2L4.5,-12.7L6.5,-11.8L8.4,-10.6L12.9,-6.9L14.4,-5.4L15.4,-3.7L16.1,-1.9L16.3,0.0L16.3,0.0L16.1,1.9L15.4,3.7L14.4,5.4L12.9,6.9L8.4,10.6L6.5,11.8L4.5,12.7L2.4,13.2L0.0,13.4L0.0,13.4L-2.4,13.2L-4.5,12.7L-6.5,11.8L-8.4,10.6L-12.9,6.9L-14.4,5.4L-15.4,3.7L-16.1,1.9L-16.3,0.0L-16.3,0.0L-16.1,-1.9L-15.4,-3.7L-14.4,-5.4L-12.9,-6.9Z" fill="#dfd826"/><path d="M14.9,4.6L14.4,5.4L12.9,6.9L8.4,10.6L6.5,11.8L4.5,12.7L2.4,13.2L0.0,13.4L0.0,13.4L-2.4,13.2L-4.5,12.7L-6.5,11.8L-8.4,10.6L-12.9,6.9L-14.4,5.4L-14.9,4.6L0.0,1.1Z" fill="#fee818"/></g>
<g transform="translate(508.2,260.4) rotate(-8.5)"><path d="M-9.1,-10.6L-7.1,-11.8L-5.0,-12.7L-2.6,-13.2L0.0,-13.4L0.0,-13.4L2.6,-13.2L5.0,-12.7L7.1,-11.8L9.1,-10.6L14.0,-6.9L15.7,-5.4L16.9,-3.7L17.6,-1.9L17.8,0.0L17.8,0.0L17.6,1.9L16.9,3.7L15.7,5.4L14.0,6.9L9.1,10.6L7.1,11.8L5.0,12.7L2.6,13.2L0.0,13.4L0.0,13.4L-2.6,13.2L-5.0,12.7L-7.1,11.8L-9.1,10.6L-14.0,6.9L-15.7,5.4L-16.9,3.7L-17.6,1.9L-17.8,0.0L-17.8,0.0L-17.6,-1.9L-16.9,-3.7L-15.7,-5.4L-14.0,-6.9Z" fill="#dfd826"/><path d="M16.2,4.6L15.7,5.4L14.0,6.9L9.1,10.6L7.1,11.8L5.0,12.7L2.6,13.2L0.0,13.4L0.0,13.4L-2.6,13.2L-5.0,12.7L-7.1,11.8L-9.1,10.6L-14.0,6.9L-15.7,5.4L-16.2,4.6L0.0,1.1Z" fill="#fee818"/></g>
<g transform="translate(550.9,258.5) rotate(-1.7)"><path d="M-9.6,-10.6L-7.5,-11.8L-5.2,-12.7L-2.7,-13.2L0.0,-13.4L0.0,-13.4L2.7,-13.2L5.2,-12.7L7.5,-11.8L9.6,-10.6L14.8,-6.9L16.5,-5.4L17.7,-3.7L18.5,-1.9L18.7,0.0L18.7,0.0L18.5,1.9L17.7,3.7L16.5,5.4L14.8,6.9L9.6,10.6L7.5,11.8L5.2,12.7L2.7,13.2L0.0,13.4L0.0,13.4L-2.7,13.2L-5.2,12.7L-7.5,11.8L-9.6,10.6L-14.8,6.9L-16.5,5.4L-17.7,3.7L-18.5,1.9L-18.7,0.0L-18.7,0.0L-18.5,-1.9L-17.7,-3.7L-16.5,-5.4L-14.8,-6.9Z" fill="#dfd826"/><path d="M17.1,4.6L16.5,5.4L14.8,6.9L9.6,10.6L7.5,11.8L5.2,12.7L2.7,13.2L0.0,13.4L0.0,13.4L-2.7,13.2L-5.2,12.7L-7.5,11.8L-9.6,10.6L-14.8,6.9L-16.5,5.4L-17.1,4.6L0.0,1.1Z" fill="#fee818"/></g>
<g transform="translate(595.0,258.3) rotate(0.0)"><path d="M-9.8,-10.6L-7.6,-11.8L-5.3,-12.7L-2.8,-13.2L0.0,-13.4L0.0,-13.4L2.8,-13.2L5.3,-12.7L7.6,-11.8L9.8,-10.6L15.0,-6.9L16.8,-5.4L18.0,-3.7L18.8,-1.9L19.0,0.0L19.0,0.0L18.8,1.9L18.0,3.7L16.8,5.4L15.0,6.9L9.8,10.6L7.6,11.8L5.3,12.7L2.8,13.2L0.0,13.4L0.0,13.4L-2.8,13.2L-5.3,12.7L-7.6,11.8L-9.8,10.6L-15.0,6.9L-16.8,5.4L-18.0,3.7L-18.8,1.9L-19.0,0.0L-19.0,0.0L-18.8,-1.9L-18.0,-3.7L-16.8,-5.4L-15.0,-6.9Z" fill="#dfd826"/><path d="M17.4,4.6L16.8,5.4L15.0,6.9L9.8,10.6L7.6,11.8L5.3,12.7L2.8,13.2L0.0,13.4L0.0,13.4L-2.8,13.2L-5.3,12.7L-7.6,11.8L-9.8,10.6L-15.0,6.9L-16.8,5.4L-17.4,4.6L0.0,1.1Z" fill="#fee818"/></g>
<g transform="translate(639.1,258.5) rotate(1.7)"><path d="M-9.6,-10.6L-7.5,-11.8L-5.2,-12.7L-2.7,-13.2L0.0,-13.4L0.0,-13.4L2.7,-13.2L5.2,-12.7L7.5,-11.8L9.6,-10.6L14.8,-6.9L16.5,-5.4L17.7,-3.7L18.5,-1.9L18.7,0.0L18.7,0.0L18.5,1.9L17.7,3.7L16.5,5.4L14.8,6.9L9.6,10.6L7.5,11.8L5.2,12.7L2.7,13.2L0.0,13.4L0.0,13.4L-2.7,13.2L-5.2,12.7L-7.5,11.8L-9.6,10.6L-14.8,6.9L-16.5,5.4L-17.7,3.7L-18.5,1.9L-18.7,0.0L-18.7,0.0L-18.5,-1.9L-17.7,-3.7L-16.5,-5.4L-14.8,-6.9Z" fill="#dfd826"/><path d="M17.1,4.6L16.5,5.4L14.8,6.9L9.6,10.6L7.5,11.8L5.2,12.7L2.7,13.2L0.0,13.4L0.0,13.4L-2.7,13.2L-5.2,12.7L-7.5,11.8L-9.6,10.6L-14.8,6.9L-16.5,5.4L-17.1,4.6L0.0,1.1Z" fill="#fee818"/></g>
<g transform="translate(681.8,260.4) rotate(8.5)"><path d="M-9.1,-10.6L-7.1,-11.8L-5.0,-12.7L-2.6,-13.2L0.0,-13.4L0.0,-13.4L2.6,-13.2L5.0,-12.7L7.1,-11.8L9.1,-10.6L14.0,-6.9L15.7,-5.4L16.9,-3.7L17.6,-1.9L17.8,0.0L17.8,0.0L17.6,1.9L16.9,3.7L15.7,5.4L14.0,6.9L9.1,10.6L7.1,11.8L5.0,12.7L2.6,13.2L0.0,13.4L0.0,13.4L-2.6,13.2L-5.0,12.7L-7.1,11.8L-9.1,10.6L-14.0,6.9L-15.7,5.4L-16.9,3.7L-17.6,1.9L-17.8,0.0L-17.8,0.0L-17.6,-1.9L-16.9,-3.7L-15.7,-5.4L-14.0,-6.9Z" fill="#dfd826"/><path d="M16.2,4.6L15.7,5.4L14.0,6.9L9.1,10.6L7.1,11.8L5.0,12.7L2.6,13.2L0.0,13.4L0.0,13.4L-2.6,13.2L-5.0,12.7L-7.1,11.8L-9.1,10.6L-14.0,6.9L-15.7,5.4L-16.2,4.6L0.0,1.1Z" fill="#fee818"/></g>
<g transform="translate(721.6,265.9) rotate(20.8)"><path d="M-8.4,-10.6L-6.5,-11.8L-4.5,-12.7L-2.4,-13.2L0.0,-13.4L0.0,-13.4L2.4,-13.2L4.5,-12.7L6.5,-11.8L8.4,-10.6L12.9,-6.9L14.4,-5.4L15.4,-3.7L16.1,-1.9L16.3,0.0L16.3,0.0L16.1,1.9L15.4,3.7L14.4,5.4L12.9,6.9L8.4,10.6L6.5,11.8L4.5,12.7L2.4,13.2L0.0,13.4L0.0,13.4L-2.4,13.2L-4.5,12.7L-6.5,11.8L-8.4,10.6L-12.9,6.9L-14.4,5.4L-15.4,3.7L-16.1,1.9L-16.3,0.0L-16.3,0.0L-16.1,-1.9L-15.4,-3.7L-14.4,-5.4L-12.9,-6.9Z" fill="#dfd826"/><path d="M14.9,4.6L14.4,5.4L12.9,6.9L8.4,10.6L6.5,11.8L4.5,12.7L2.4,13.2L0.0,13.4L0.0,13.4L-2.4,13.2L-4.5,12.7L-6.5,11.8L-8.4,10.6L-12.9,6.9L-14.4,5.4L-14.9,4.6L0.0,1.1Z" fill="#fee818"/></g>
<g transform="translate(757.3,276.1) rotate(36.7)"><path d="M-7.3,-10.6L-5.7,-11.8L-4.0,-12.7L-2.1,-13.2L0.0,-13.4L0.0,-13.4L2.1,-13.2L4.0,-12.7L5.7,-11.8L7.3,-10.6L11.3,-6.9L12.6,-5.4L13.5,-3.7L14.1,-1.9L14.3,0.0L14.3,0.0L14.1,1.9L13.5,3.7L12.6,5.4L11.3,6.9L7.3,10.6L5.7,11.8L4.0,12.7L2.1,13.2L0.0,13.4L0.0,13.4L-2.1,13.2L-4.0,12.7L-5.7,11.8L-7.3,10.6L-11.3,6.9L-12.6,5.4L-13.5,3.7L-14.1,1.9L-14.3,0.0L-14.3,0.0L-14.1,-1.9L-13.5,-3.7L-12.6,-5.4L-11.3,-6.9Z" fill="#dfd826"/><path d="M13.0,4.6L12.6,5.4L11.3,6.9L7.3,10.6L5.7,11.8L4.0,12.7L2.1,13.2L0.0,13.4L0.0,13.4L-2.1,13.2L-4.0,12.7L-5.7,11.8L-7.3,10.6L-11.3,6.9L-12.6,5.4L-13.0,4.6L-0.0,1.1Z" fill="#fee818"/></g>
<g transform="translate(443.3,300.2) rotate(-26.2)"><path d="M-8.2,-12.9L-6.4,-14.4L-4.5,-15.5L-2.3,-16.1L0.0,-16.4L0.0,-16.4L2.3,-16.1L4.5,-15.5L6.4,-14.4L8.2,-12.9L12.7,-8.4L14.1,-6.5L15.2,-4.5L15.9,-2.4L16.1,0.0L16.1,0.0L15.9,2.4L15.2,4.5L14.1,6.5L12.7,8.4L8.2,12.9L6.4,14.4L4.5,15.5L2.3,16.1L0.0,16.4L0.0,16.4L-2.3,16.1L-4.5,15.5L-6.4,14.4L-8.2,12.9L-12.7,8.4L-14.1,6.5L-15.2,4.5L-15.9,2.4L-16.1,0.0L-16.1,0.0L-15.9,-2.4L-15.2,-4.5L-14.1,-6.5L-12.7,-8.4Z" fill="#dfd826"/><path d="M14.6,5.6L14.1,6.5L12.7,8.4L8.2,12.9L6.4,14.4L4.5,15.5L2.3,16.1L0.0,16.4L0.0,16.4L-2.3,16.1L-4.5,15.5L-6.4,14.4L-8.2,12.9L-12.7,8.4L-14.1,6.5L-14.6,5.6L0.0,1.3Z" fill="#fee818"/></g>
<g transform="translate(482.9,292.8) rotate(-12.9)"><path d="M-9.2,-12.9L-7.2,-14.4L-5.0,-15.5L-2.6,-16.1L0.0,-16.4L0.0,-16.4L2.6,-16.1L5.0,-15.5L7.2,-14.4L9.2,-12.9L14.1,-8.4L15.8,-6.5L17.0,-4.5L17.7,-2.4L17.9,0.0L17.9,0.0L17.7,2.4L17.0,4.5L15.8,6.5L14.1,8.4L9.2,12.9L7.2,14.4L5.0,15.5L2.6,16.1L0.0,16.4L0.0,16.4L-2.6,16.1L-5.0,15.5L-7.2,14.4L-9.2,12.9L-14.1,8.4L-15.8,6.5L-17.0,4.5L-17.7,2.4L-17.9,0.0L-17.9,0.0L-17.7,-2.4L-17.0,-4.5L-15.8,-6.5L-14.1,-8.4Z" fill="#dfd826"/><path d="M16.3,5.6L15.8,6.5L14.1,8.4L9.2,12.9L7.2,14.4L5.0,15.5L2.6,16.1L0.0,16.4L0.0,16.4L-2.6,16.1L-5.0,15.5L-7.2,14.4L-9.2,12.9L-14.1,8.4L-15.8,6.5L-16.3,5.6L-0.0,1.3Z" fill="#fee818"/></g>
<g transform="translate(526.3,289.4) rotate(-4.0)"><path d="M-9.8,-12.9L-7.7,-14.4L-5.3,-15.5L-2.8,-16.1L0.0,-16.4L0.0,-16.4L2.8,-16.1L5.3,-15.5L7.7,-14.4L9.8,-12.9L15.1,-8.4L16.9,-6.5L18.2,-4.5L18.9,-2.4L19.2,0.0L19.2,0.0L18.9,2.4L18.2,4.5L16.9,6.5L15.1,8.4L9.8,12.9L7.7,14.4L5.3,15.5L2.8,16.1L0.0,16.4L0.0,16.4L-2.8,16.1L-5.3,15.5L-7.7,14.4L-9.8,12.9L-15.1,8.4L-16.9,6.5L-18.2,4.5L-18.9,2.4L-19.2,0.0L-19.2,0.0L-18.9,-2.4L-18.2,-4.5L-16.9,-6.5L-15.1,-8.4Z" fill="#dfd826"/><path d="M17.5,5.6L16.9,6.5L15.1,8.4L9.8,12.9L7.7,14.4L5.3,15.5L2.8,16.1L0.0,16.4L0.0,16.4L-2.8,16.1L-5.3,15.5L-7.7,14.4L-9.8,12.9L-15.1,8.4L-16.9,6.5L-17.5,5.6L-0.0,1.3Z" fill="#fee818"/></g>
<g transform="translate(571.8,288.7) rotate(-0.3)"><path d="M-10.2,-12.9L-7.9,-14.4L-5.5,-15.5L-2.9,-16.1L0.0,-16.4L0.0,-16.4L2.9,-16.1L5.5,-15.5L7.9,-14.4L10.2,-12.9L15.6,-8.4L17.5,-6.5L18.8,-4.5L19.6,-2.4L19.8,0.0L19.8,0.0L19.6,2.4L18.8,4.5L17.5,6.5L15.6,8.4L10.2,12.9L7.9,14.4L5.5,15.5L2.9,16.1L0.0,16.4L0.0,16.4L-2.9,16.1L-5.5,15.5L-7.9,14.4L-10.2,12.9L-15.6,8.4L-17.5,6.5L-18.8,4.5L-19.6,2.4L-19.8,0.0L-19.8,0.0L-19.6,-2.4L-18.8,-4.5L-17.5,-6.5L-15.6,-8.4Z" fill="#dfd826"/><path d="M18.1,5.6L17.5,6.5L15.6,8.4L10.2,12.9L7.9,14.4L5.5,15.5L2.9,16.1L0.0,16.4L0.0,16.4L-2.9,16.1L-5.5,15.5L-7.9,14.4L-10.2,12.9L-15.6,8.4L-17.5,6.5L-18.1,5.6L-0.0,1.3Z" fill="#fee818"/></g>
<g transform="translate(618.2,288.7) rotate(0.3)"><path d="M-10.2,-12.9L-7.9,-14.4L-5.5,-15.5L-2.9,-16.1L0.0,-16.4L0.0,-16.4L2.9,-16.1L5.5,-15.5L7.9,-14.4L10.2,-12.9L15.6,-8.4L17.5,-6.5L18.8,-4.5L19.6,-2.4L19.8,0.0L19.8,0.0L19.6,2.4L18.8,4.5L17.5,6.5L15.6,8.4L10.2,12.9L7.9,14.4L5.5,15.5L2.9,16.1L0.0,16.4L0.0,16.4L-2.9,16.1L-5.5,15.5L-7.9,14.4L-10.2,12.9L-15.6,8.4L-17.5,6.5L-18.8,4.5L-19.6,2.4L-19.8,0.0L-19.8,0.0L-19.6,-2.4L-18.8,-4.5L-17.5,-6.5L-15.6,-8.4Z" fill="#dfd826"/><path d="M18.1,5.6L17.5,6.5L15.6,8.4L10.2,12.9L7.9,14.4L5.5,15.5L2.9,16.1L0.0,16.4L0.0,16.4L-2.9,16.1L-5.5,15.5L-7.9,14.4L-10.2,12.9L-15.6,8.4L-17.5,6.5L-18.1,5.6L-0.0,1.3Z" fill="#fee818"/></g>
<g transform="translate(663.7,289.4) rotate(4.0)"><path d="M-9.8,-12.9L-7.7,-14.4L-5.3,-15.5L-2.8,-16.1L0.0,-16.4L0.0,-16.4L2.8,-16.1L5.3,-15.5L7.7,-14.4L9.8,-12.9L15.1,-8.4L16.9,-6.5L18.2,-4.5L18.9,-2.4L19.2,0.0L19.2,0.0L18.9,2.4L18.2,4.5L16.9,6.5L15.1,8.4L9.8,12.9L7.7,14.4L5.3,15.5L2.8,16.1L0.0,16.4L0.0,16.4L-2.8,16.1L-5.3,15.5L-7.7,14.4L-9.8,12.9L-15.1,8.4L-16.9,6.5L-18.2,4.5L-18.9,2.4L-19.2,0.0L-19.2,0.0L-18.9,-2.4L-18.2,-4.5L-16.9,-6.5L-15.1,-8.4Z" fill="#dfd826"/><path d="M17.5,5.6L16.9,6.5L15.1,8.4L9.8,12.9L7.7,14.4L5.3,15.5L2.8,16.1L0.0,16.4L0.0,16.4L-2.8,16.1L-5.3,15.5L-7.7,14.4L-9.8,12.9L-15.1,8.4L-16.9,6.5L-17.5,5.6L-0.0,1.3Z" fill="#fee818"/></g>
<g transform="translate(707.1,292.8) rotate(12.9)"><path d="M-9.2,-12.9L-7.2,-14.4L-5.0,-15.5L-2.6,-16.1L0.0,-16.4L0.0,-16.4L2.6,-16.1L5.0,-15.5L7.2,-14.4L9.2,-12.9L14.1,-8.4L15.8,-6.5L17.0,-4.5L17.7,-2.4L17.9,0.0L17.9,0.0L17.7,2.4L17.0,4.5L15.8,6.5L14.1,8.4L9.2,12.9L7.2,14.4L5.0,15.5L2.6,16.1L0.0,16.4L0.0,16.4L-2.6,16.1L-5.0,15.5L-7.2,14.4L-9.2,12.9L-14.1,8.4L-15.8,6.5L-17.0,4.5L-17.7,2.4L-17.9,0.0L-17.9,0.0L-17.7,-2.4L-17.0,-4.5L-15.8,-6.5L-14.1,-8.4Z" fill="#dfd826"/><path d="M16.3,5.6L15.8,6.5L14.1,8.4L9.2,12.9L7.2,14.4L5.0,15.5L2.6,16.1L0.0,16.4L0.0,16.4L-2.6,16.1L-5.0,15.5L-7.2,14.4L-9.2,12.9L-14.1,8.4L-15.8,6.5L-16.3,5.6L-0.0,1.3Z" fill="#fee818"/></g>
<g transform="translate(746.7,300.2) rotate(26.2)"><path d="M-8.2,-12.9L-6.4,-14.4L-4.5,-15.5L-2.3,-16.1L0.0,-16.4L0.0,-16.4L2.3,-16.1L4.5,-15.5L6.4,-14.4L8.2,-12.9L12.7,-8.4L14.1,-6.5L15.2,-4.5L15.9,-2.4L16.1,0.0L16.1,0.0L15.9,2.4L15.2,4.5L14.1,6.5L12.7,8.4L8.2,12.9L6.4,14.4L4.5,15.5L2.3,16.1L0.0,16.4L0.0,16.4L-2.3,16.1L-4.5,15.5L-6.4,14.4L-8.2,12.9L-12.7,8.4L-14.1,6.5L-15.2,4.5L-15.9,2.4L-16.1,0.0L-16.1,0.0L-15.9,-2.4L-15.2,-4.5L-14.1,-6.5L-12.7,-8.4Z" fill="#dfd826"/><path d="M14.6,5.6L14.1,6.5L12.7,8.4L8.2,12.9L6.4,14.4L4.5,15.5L2.3,16.1L0.0,16.4L0.0,16.4L-2.3,16.1L-4.5,15.5L-6.4,14.4L-8.2,12.9L-12.7,8.4L-14.1,6.5L-14.6,5.6L0.0,1.3Z" fill="#fee818"/></g>
<g transform="translate(421.2,337.4) rotate(-27.2)"><path d="M-7.8,-14.2L-6.1,-15.9L-4.3,-17.1L-2.2,-17.8L0.0,-18.0L0.0,-18.0L2.2,-17.8L4.3,-17.1L6.1,-15.9L7.8,-14.2L12.0,-9.2L13.5,-7.2L14.5,-5.0L15.1,-2.6L15.3,0.0L15.3,0.0L15.1,2.6L14.5,5.0L13.5,7.2L12.0,9.2L7.8,14.2L6.1,15.9L4.3,17.1L2.2,17.8L0.0,18.0L0.0,18.0L-2.2,17.8L-4.3,17.1L-6.1,15.9L-7.8,14.2L-12.0,9.2L-13.5,7.2L-14.5,5.0L-15.1,2.6L-15.3,0.0L-15.3,0.0L-15.1,-2.6L-14.5,-5.0L-13.5,-7.2L-12.0,-9.2Z" fill="#dfd826"/><path d="M13.9,6.2L13.5,7.2L12.0,9.2L7.8,14.2L6.1,15.9L4.3,17.1L2.2,17.8L0.0,18.0L0.0,18.0L-2.2,17.8L-4.3,17.1L-6.1,15.9L-7.8,14.2L-12.0,9.2L-13.5,7.2L-13.9,6.2L0.0,1.4Z" fill="#fee818"/></g>
<g transform="translate(459.4,329.6) rotate(-15.2)"><path d="M-8.9,-14.2L-7.0,-15.9L-4.9,-17.1L-2.5,-17.8L0.0,-18.0L0.0,-18.0L2.5,-17.8L4.9,-17.1L7.0,-15.9L8.9,-14.2L13.8,-9.2L15.4,-7.2L16.5,-5.0L17.2,-2.6L17.5,0.0L17.5,0.0L17.2,2.6L16.5,5.0L15.4,7.2L13.8,9.2L8.9,14.2L7.0,15.9L4.9,17.1L2.5,17.8L0.0,18.0L0.0,18.0L-2.5,17.8L-4.9,17.1L-7.0,15.9L-8.9,14.2L-13.8,9.2L-15.4,7.2L-16.5,5.0L-17.2,2.6L-17.5,0.0L-17.5,0.0L-17.2,-2.6L-16.5,-5.0L-15.4,-7.2L-13.8,-9.2Z" fill="#dfd826"/><path d="M15.9,6.2L15.4,7.2L13.8,9.2L8.9,14.2L7.0,15.9L4.9,17.1L2.5,17.8L0.0,18.0L0.0,18.0L-2.5,17.8L-4.9,17.1L-7.0,15.9L-8.9,14.2L-13.8,9.2L-15.4,7.2L-15.9,6.2L0.0,1.4Z" fill="#fee818"/></g>
<g transform="translate(502.1,325.3) rotate(-6.2)"><path d="M-9.8,-14.2L-7.6,-15.9L-5.3,-17.1L-2.8,-17.8L0.0,-18.0L0.0,-18.0L2.8,-17.8L5.3,-17.1L7.6,-15.9L9.8,-14.2L15.0,-9.2L16.8,-7.2L18.1,-5.0L18.8,-2.6L19.1,0.0L19.1,0.0L18.8,2.6L18.1,5.0L16.8,7.2L15.0,9.2L9.8,14.2L7.6,15.9L5.3,17.1L2.8,17.8L0.0,18.0L0.0,18.0L-2.8,17.8L-5.3,17.1L-7.6,15.9L-9.8,14.2L-15.0,9.2L-16.8,7.2L-18.1,5.0L-18.8,2.6L-19.1,0.0L-19.1,0.0L-18.8,-2.6L-18.1,-5.0L-16.8,-7.2L-15.0,-9.2Z" fill="#dfd826"/><path d="M17.4,6.2L16.8,7.2L15.0,9.2L9.8,14.2L7.6,15.9L5.3,17.1L2.8,17.8L0.0,18.0L0.0,18.0L-2.8,17.8L-5.3,17.1L-7.6,15.9L-9.8,14.2L-15.0,9.2L-16.8,7.2L-17.4,6.2L0.0,1.4Z" fill="#fee818"/></g>
<g transform="translate(547.8,323.8) rotate(-1.2)"><path d="M-10.3,-14.2L-8.0,-15.9L-5.6,-17.1L-2.9,-17.8L0.0,-18.0L0.0,-18.0L2.9,-17.8L5.6,-17.1L8.0,-15.9L10.3,-14.2L15.8,-9.2L17.7,-7.2L19.0,-5.0L19.8,-2.6L20.1,0.0L20.1,0.0L19.8,2.6L19.0,5.0L17.7,7.2L15.8,9.2L10.3,14.2L8.0,15.9L5.6,17.1L2.9,17.8L0.0,18.0L0.0,18.0L-2.9,17.8L-5.6,17.1L-8.0,15.9L-10.3,14.2L-15.8,9.2L-17.7,7.2L-19.0,5.0L-19.8,2.6L-20.1,0.0L-20.1,0.0L-19.8,-2.6L-19.0,-5.0L-17.7,-7.2L-15.8,-9.2Z" fill="#dfd826"/><path d="M18.3,6.2L17.7,7.2L15.8,9.2L10.3,14.2L8.0,15.9L5.6,17.1L2.9,17.8L0.0,18.0L0.0,18.0L-2.9,17.8L-5.6,17.1L-8.0,15.9L-10.3,14.2L-15.8,9.2L-17.7,7.2L-18.3,6.2L0.0,1.4Z" fill="#fee818"/></g>
<g transform="translate(595.0,323.6) rotate(0.0)"><path d="M-10.4,-14.2L-8.2,-15.9L-5.7,-17.1L-2.9,-17.8L0.0,-18.0L0.0,-18.0L2.9,-17.8L5.7,-17.1L8.2,-15.9L10.4,-14.2L16.1,-9.2L18.0,-7.2L19.3,-5.0L20.1,-2.6L20.4,0.0L20.4,0.0L20.1,2.6L19.3,5.0L18.0,7.2L16.1,9.2L10.4,14.2L8.2,15.9L5.7,17.1L2.9,17.8L0.0,18.0L0.0,18.0L-2.9,17.8L-5.7,17.1L-8.2,15.9L-10.4,14.2L-16.1,9.2L-18.0,7.2L-19.3,5.0L-20.1,2.6L-20.4,0.0L-20.4,0.0L-20.1,-2.6L-19.3,-5.0L-18.0,-7.2L-16.1,-9.2Z" fill="#dfd826"/><path d="M18.6,6.2L18.0,7.2L16.1,9.2L10.4,14.2L8.2,15.9L5.7,17.1L2.9,17.8L0.0,18.0L0.0,18.0L-2.9,17.8L-5.7,17.1L-8.2,15.9L-10.4,14.2L-16.1,9.2L-18.0,7.2L-18.6,6.2L0.0,1.4Z" fill="#fee818"/></g>
<g transform="translate(642.2,323.8) rotate(1.2)"><path d="M-10.3,-14.2L-8.0,-15.9L-5.6,-17.1L-2.9,-17.8L0.0,-18.0L0.0,-18.0L2.9,-17.8L5.6,-17.1L8.0,-15.9L10.3,-14.2L15.8,-9.2L17.7,-7.2L19.0,-5.0L19.8,-2.6L20.1,0.0L20.1,0.0L19.8,2.6L19.0,5.0L17.7,7.2L15.8,9.2L10.3,14.2L8.0,15.9L5.6,17.1L2.9,17.8L0.0,18.0L0.0,18.0L-2.9,17.8L-5.6,17.1L-8.0,15.9L-10.3,14.2L-15.8,9.2L-17.7,7.2L-19.0,5.0L-19.8,2.6L-20.1,0.0L-20.1,0.0L-19.8,-2.6L-19.0,-5.0L-17.7,-7.2L-15.8,-9.2Z" fill="#dfd826"/><path d="M18.3,6.2L17.7,7.2L15.8,9.2L10.3,14.2L8.0,15.9L5.6,17.1L2.9,17.8L0.0,18.0L0.0,18.0L-2.9,17.8L-5.6,17.1L-8.0,15.9L-10.3,14.2L-15.8,9.2L-17.7,7.2L-18.3,6.2L0.0,1.4Z" fill="#fee818"/></g>
<g transform="translate(687.9,325.3) rotate(6.2)"><path d="M-9.8,-14.2L-7.6,-15.9L-5.3,-17.1L-2.8,-17.8L0.0,-18.0L0.0,-18.0L2.8,-17.8L5.3,-17.1L7.6,-15.9L9.8,-14.2L15.0,-9.2L16.8,-7.2L18.1,-5.0L18.8,-2.6L19.1,0.0L19.1,0.0L18.8,2.6L18.1,5.0L16.8,7.2L15.0,9.2L9.8,14.2L7.6,15.9L5.3,17.1L2.8,17.8L0.0,18.0L0.0,18.0L-2.8,17.8L-5.3,17.1L-7.6,15.9L-9.8,14.2L-15.0,9.2L-16.8,7.2L-18.1,5.0L-18.8,2.6L-19.1,0.0L-19.1,0.0L-18.8,-2.6L-18.1,-5.0L-16.8,-7.2L-15.0,-9.2Z" fill="#dfd826"/><path d="M17.4,6.2L16.8,7.2L15.0,9.2L9.8,14.2L7.6,15.9L5.3,17.1L2.8,17.8L0.0,18.0L0.0,18.0L-2.8,17.8L-5.3,17.1L-7.6,15.9L-9.8,14.2L-15.0,9.2L-16.8,7.2L-17.4,6.2L0.0,1.4Z" fill="#fee818"/></g>
<g transform="translate(730.6,329.6) rotate(15.2)"><path d="M-8.9,-14.2L-7.0,-15.9L-4.9,-17.1L-2.5,-17.8L0.0,-18.0L0.0,-18.0L2.5,-17.8L4.9,-17.1L7.0,-15.9L8.9,-14.2L13.8,-9.2L15.4,-7.2L16.5,-5.0L17.2,-2.6L17.5,0.0L17.5,0.0L17.2,2.6L16.5,5.0L15.4,7.2L13.8,9.2L8.9,14.2L7.0,15.9L4.9,17.1L2.5,17.8L0.0,18.0L0.0,18.0L-2.5,17.8L-4.9,17.1L-7.0,15.9L-8.9,14.2L-13.8,9.2L-15.4,7.2L-16.5,5.0L-17.2,2.6L-17.5,0.0L-17.5,0.0L-17.2,-2.6L-16.5,-5.0L-15.4,-7.2L-13.8,-9.2Z" fill="#dfd826"/><path d="M15.9,6.2L15.4,7.2L13.8,9.2L8.9,14.2L7.0,15.9L4.9,17.1L2.5,17.8L0.0,18.0L0.0,18.0L-2.5,17.8L-4.9,17.1L-7.0,15.9L-8.9,14.2L-13.8,9.2L-15.4,7.2L-15.9,6.2L0.0,1.4Z" fill="#fee818"/></g>
<g transform="translate(437.3,367.8) rotate(-13.9)"><path d="M-8.5,-15.1L-6.7,-16.9L-4.6,-18.2L-2.4,-18.9L0.0,-19.2L0.0,-19.2L2.4,-18.9L4.6,-18.2L6.7,-16.9L8.5,-15.1L13.2,-9.8L14.7,-7.7L15.8,-5.3L16.5,-2.8L16.7,0.0L16.7,0.0L16.5,2.8L15.8,5.3L14.7,7.7L13.2,9.8L8.5,15.1L6.7,16.9L4.6,18.2L2.4,18.9L0.0,19.2L0.0,19.2L-2.4,18.9L-4.6,18.2L-6.7,16.9L-8.5,15.1L-13.2,9.8L-14.7,7.7L-15.8,5.3L-16.5,2.8L-16.7,0.0L-16.7,0.0L-16.5,-2.8L-15.8,-5.3L-14.7,-7.7L-13.2,-9.8Z" fill="#dfd826"/><path d="M15.2,6.6L14.7,7.7L13.2,9.8L8.5,15.1L6.7,16.9L4.6,18.2L2.4,18.9L0.0,19.2L0.0,19.2L-2.4,18.9L-4.6,18.2L-6.7,16.9L-8.5,15.1L-13.2,9.8L-14.7,7.7L-15.2,6.6L0.0,1.5Z" fill="#fee818"/></g>
<g transform="translate(478.6,363.7) rotate(-6.8)"><path d="M-9.5,-15.1L-7.5,-16.9L-5.2,-18.2L-2.7,-18.9L0.0,-19.2L0.0,-19.2L2.7,-18.9L5.2,-18.2L7.5,-16.9L9.5,-15.1L14.7,-9.8L16.4,-7.7L17.6,-5.3L18.4,-2.8L18.6,0.0L18.6,0.0L18.4,2.8L17.6,5.3L16.4,7.7L14.7,9.8L9.5,15.1L7.5,16.9L5.2,18.2L2.7,18.9L0.0,19.2L0.0,19.2L-2.7,18.9L-5.2,18.2L-7.5,16.9L-9.5,15.1L-14.7,9.8L-16.4,7.7L-17.6,5.3L-18.4,2.8L-18.6,0.0L-18.6,0.0L-18.4,-2.8L-17.6,-5.3L-16.4,-7.7L-14.7,-9.8Z" fill="#dfd826"/><path d="M17.0,6.6L16.4,7.7L14.7,9.8L9.5,15.1L7.5,16.9L5.2,18.2L2.7,18.9L0.0,19.2L0.0,19.2L-2.7,18.9L-5.2,18.2L-7.5,16.9L-9.5,15.1L-14.7,9.8L-16.4,7.7L-17.0,6.6L-0.0,1.5Z" fill="#fee818"/></g>
<g transform="translate(523.6,361.9) rotate(-2.1)"><path d="M-10.2,-15.1L-8.0,-16.9L-5.5,-18.2L-2.9,-18.9L0.0,-19.2L0.0,-19.2L2.9,-18.9L5.5,-18.2L8.0,-16.9L10.2,-15.1L15.7,-9.8L17.6,-7.7L18.9,-5.3L19.7,-2.8L19.9,0.0L19.9,0.0L19.7,2.8L18.9,5.3L17.6,7.7L15.7,9.8L10.2,15.1L8.0,16.9L5.5,18.2L2.9,18.9L0.0,19.2L0.0,19.2L-2.9,18.9L-5.5,18.2L-8.0,16.9L-10.2,15.1L-15.7,9.8L-17.6,7.7L-18.9,5.3L-19.7,2.8L-19.9,0.0L-19.9,0.0L-19.7,-2.8L-18.9,-5.3L-17.6,-7.7L-15.7,-9.8Z" fill="#dfd826"/><path d="M18.2,6.6L17.6,7.7L15.7,9.8L10.2,15.1L8.0,16.9L5.5,18.2L2.9,18.9L0.0,19.2L0.0,19.2L-2.9,18.9L-5.5,18.2L-8.0,16.9L-10.2,15.1L-15.7,9.8L-17.6,7.7L-18.2,6.6L-0.0,1.5Z" fill="#fee818"/></g>
<g transform="translate(570.9,361.5) rotate(-0.2)"><path d="M-10.6,-15.1L-8.3,-16.9L-5.7,-18.2L-3.0,-18.9L0.0,-19.2L0.0,-19.2L3.0,-18.9L5.7,-18.2L8.3,-16.9L10.6,-15.1L16.2,-9.8L18.2,-7.7L19.5,-5.3L20.3,-2.8L20.6,0.0L20.6,0.0L20.3,2.8L19.5,5.3L18.2,7.7L16.2,9.8L10.6,15.1L8.3,16.9L5.7,18.2L3.0,18.9L0.0,19.2L0.0,19.2L-3.0,18.9L-5.7,18.2L-8.3,16.9L-10.6,15.1L-16.2,9.8L-18.2,7.7L-19.5,5.3L-20.3,2.8L-20.6,0.0L-20.6,0.0L-20.3,-2.8L-19.5,-5.3L-18.2,-7.7L-16.2,-9.8Z" fill="#dfd826"/><path d="M18.8,6.6L18.2,7.7L16.2,9.8L10.6,15.1L8.3,16.9L5.7,18.2L3.0,18.9L0.0,19.2L0.0,19.2L-3.0,18.9L-5.7,18.2L-8.3,16.9L-10.6,15.1L-16.2,9.8L-18.2,7.7L-18.8,6.6L0.0,1.5Z" fill="#fee818"/></g>
<g transform="translate(619.1,361.5) rotate(0.2)"><path d="M-10.6,-15.1L-8.3,-16.9L-5.7,-18.2L-3.0,-18.9L0.0,-19.2L0.0,-19.2L3.0,-18.9L5.7,-18.2L8.3,-16.9L10.6,-15.1L16.2,-9.8L18.2,-7.7L19.5,-5.3L20.3,-2.8L20.6,0.0L20.6,0.0L20.3,2.8L19.5,5.3L18.2,7.7L16.2,9.8L10.6,15.1L8.3,16.9L5.7,18.2L3.0,18.9L0.0,19.2L0.0,19.2L-3.0,18.9L-5.7,18.2L-8.3,16.9L-10.6,15.1L-16.2,9.8L-18.2,7.7L-19.5,5.3L-20.3,2.8L-20.6,0.0L-20.6,0.0L-20.3,-2.8L-19.5,-5.3L-18.2,-7.7L-16.2,-9.8Z" fill="#dfd826"/><path d="M18.8,6.6L18.2,7.7L16.2,9.8L10.6,15.1L8.3,16.9L5.7,18.2L3.0,18.9L0.0,19.2L0.0,19.2L-3.0,18.9L-5.7,18.2L-8.3,16.9L-10.6,15.1L-16.2,9.8L-18.2,7.7L-18.8,6.6L0.0,1.5Z" fill="#fee818"/></g>
<g transform="translate(666.4,361.9) rotate(2.1)"><path d="M-10.2,-15.1L-8.0,-16.9L-5.5,-18.2L-2.9,-18.9L0.0,-19.2L0.0,-19.2L2.9,-18.9L5.5,-18.2L8.0,-16.9L10.2,-15.1L15.7,-9.8L17.6,-7.7L18.9,-5.3L19.7,-2.8L19.9,0.0L19.9,0.0L19.7,2.8L18.9,5.3L17.6,7.7L15.7,9.8L10.2,15.1L8.0,16.9L5.5,18.2L2.9,18.9L0.0,19.2L0.0,19.2L-2.9,18.9L-5.5,18.2L-8.0,16.9L-10.2,15.1L-15.7,9.8L-17.6,7.7L-18.9,5.3L-19.7,2.8L-19.9,0.0L-19.9,0.0L-19.7,-2.8L-18.9,-5.3L-17.6,-7.7L-15.7,-9.8Z" fill="#dfd826"/><path d="M18.2,6.6L17.6,7.7L15.7,9.8L10.2,15.1L8.0,16.9L5.5,18.2L2.9,18.9L0.0,19.2L0.0,19.2L-2.9,18.9L-5.5,18.2L-8.0,16.9L-10.2,15.1L-15.7,9.8L-17.6,7.7L-18.2,6.6L-0.0,1.5Z" fill="#fee818"/></g>
<g transform="translate(711.4,363.7) rotate(6.8)"><path d="M-9.5,-15.1L-7.5,-16.9L-5.2,-18.2L-2.7,-18.9L0.0,-19.2L0.0,-19.2L2.7,-18.9L5.2,-18.2L7.5,-16.9L9.5,-15.1L14.7,-9.8L16.4,-7.7L17.6,-5.3L18.4,-2.8L18.6,0.0L18.6,0.0L18.4,2.8L17.6,5.3L16.4,7.7L14.7,9.8L9.5,15.1L7.5,16.9L5.2,18.2L2.7,18.9L0.0,19.2L0.0,19.2L-2.7,18.9L-5.2,18.2L-7.5,16.9L-9.5,15.1L-14.7,9.8L-16.4,7.7L-17.6,5.3L-18.4,2.8L-18.6,0.0L-18.6,0.0L-18.4,-2.8L-17.6,-5.3L-16.4,-7.7L-14.7,-9.8Z" fill="#dfd826"/><path d="M17.0,6.6L16.4,7.7L14.7,9.8L9.5,15.1L7.5,16.9L5.2,18.2L2.7,18.9L0.0,19.2L0.0,19.2L-2.7,18.9L-5.2,18.2L-7.5,16.9L-9.5,15.1L-14.7,9.8L-16.4,7.7L-17.0,6.6L-0.0,1.5Z" fill="#fee818"/></g>
<g transform="translate(752.7,367.8) rotate(13.9)"><path d="M-8.5,-15.1L-6.7,-16.9L-4.6,-18.2L-2.4,-18.9L0.0,-19.2L0.0,-19.2L2.4,-18.9L4.6,-18.2L6.7,-16.9L8.5,-15.1L13.2,-9.8L14.7,-7.7L15.8,-5.3L16.5,-2.8L16.7,0.0L16.7,0.0L16.5,2.8L15.8,5.3L14.7,7.7L13.2,9.8L8.5,15.1L6.7,16.9L4.6,18.2L2.4,18.9L0.0,19.2L0.0,19.2L-2.4,18.9L-4.6,18.2L-6.7,16.9L-8.5,15.1L-13.2,9.8L-14.7,7.7L-15.8,5.3L-16.5,2.8L-16.7,0.0L-16.7,0.0L-16.5,-2.8L-15.8,-5.3L-14.7,-7.7L-13.2,-9.8Z" fill="#dfd826"/><path d="M15.2,6.6L14.7,7.7L13.2,9.8L8.5,15.1L6.7,16.9L4.6,18.2L2.4,18.9L0.0,19.2L0.0,19.2L-2.4,18.9L-4.6,18.2L-6.7,16.9L-8.5,15.1L-13.2,9.8L-14.7,7.7L-15.2,6.6L0.0,1.5Z" fill="#fee818"/></g>
<g transform="translate(416.9,405.1) rotate(-7.5)"><path d="M-8.0,-15.7L-6.3,-17.6L-4.4,-18.9L-2.3,-19.7L0.0,-19.9L0.0,-19.9L2.3,-19.7L4.4,-18.9L6.3,-17.6L8.0,-15.7L12.3,-10.2L13.8,-8.0L14.8,-5.5L15.5,-2.9L15.7,0.0L15.7,0.0L15.5,2.9L14.8,5.5L13.8,8.0L12.3,10.2L8.0,15.7L6.3,17.6L4.4,18.9L2.3,19.7L0.0,19.9L0.0,19.9L-2.3,19.7L-4.4,18.9L-6.3,17.6L-8.0,15.7L-12.3,10.2L-13.8,8.0L-14.8,5.5L-15.5,2.9L-15.7,0.0L-15.7,0.0L-15.5,-2.9L-14.8,-5.5L-13.8,-8.0L-12.3,-10.2Z" fill="#dfd826"/><path d="M14.3,6.9L13.8,8.0L12.3,10.2L8.0,15.7L6.3,17.6L4.4,18.9L2.3,19.7L0.0,19.9L0.0,19.9L-2.3,19.7L-4.4,18.9L-6.3,17.6L-8.0,15.7L-12.3,10.2L-13.8,8.0L-14.3,6.9L0.0,1.6Z" fill="#fee818"/></g>
<g transform="translate(456.1,402.9) rotate(-4.2)"><path d="M-9.2,-15.7L-7.2,-17.6L-5.0,-18.9L-2.6,-19.7L0.0,-19.9L0.0,-19.9L2.6,-19.7L5.0,-18.9L7.2,-17.6L9.2,-15.7L14.1,-10.2L15.8,-8.0L16.9,-5.5L17.7,-2.9L17.9,0.0L17.9,0.0L17.7,2.9L16.9,5.5L15.8,8.0L14.1,10.2L9.2,15.7L7.2,17.6L5.0,18.9L2.6,19.7L0.0,19.9L0.0,19.9L-2.6,19.7L-5.0,18.9L-7.2,17.6L-9.2,15.7L-14.1,10.2L-15.8,8.0L-16.9,5.5L-17.7,2.9L-17.9,0.0L-17.9,0.0L-17.7,-2.9L-16.9,-5.5L-15.8,-8.0L-14.1,-10.2Z" fill="#dfd826"/><path d="M16.3,6.9L15.8,8.0L14.1,10.2L9.2,15.7L7.2,17.6L5.0,18.9L2.6,19.7L0.0,19.9L0.0,19.9L-2.6,19.7L-5.0,18.9L-7.2,17.6L-9.2,15.7L-14.1,10.2L-15.8,8.0L-16.3,6.9L0.0,1.6Z" fill="#fee818"/></g>
<g transform="translate(499.8,401.7) rotate(-1.7)"><path d="M-10.0,-15.7L-7.8,-17.6L-5.4,-18.9L-2.8,-19.7L0.0,-19.9L0.0,-19.9L2.8,-19.7L5.4,-18.9L7.8,-17.6L10.0,-15.7L15.4,-10.2L17.2,-8.0L18.5,-5.5L19.3,-2.9L19.5,0.0L19.5,0.0L19.3,2.9L18.5,5.5L17.2,8.0L15.4,10.2L10.0,15.7L7.8,17.6L5.4,18.9L2.8,19.7L0.0,19.9L0.0,19.9L-2.8,19.7L-5.4,18.9L-7.8,17.6L-10.0,15.7L-15.4,10.2L-17.2,8.0L-18.5,5.5L-19.3,2.9L-19.5,0.0L-19.5,0.0L-19.3,-2.9L-18.5,-5.5L-17.2,-8.0L-15.4,-10.2Z" fill="#dfd826"/><path d="M17.8,6.9L17.2,8.0L15.4,10.2L10.0,15.7L7.8,17.6L5.4,18.9L2.8,19.7L0.0,19.9L0.0,19.9L-2.8,19.7L-5.4,18.9L-7.8,17.6L-10.0,15.7L-15.4,10.2L-17.2,8.0L-17.8,6.9L0.0,1.6Z" fill="#fee818"/></g>
<g transform="translate(546.6,401.3) rotate(-0.3)"><path d="M-10.5,-15.7L-8.2,-17.6L-5.7,-18.9L-3.0,-19.7L0.0,-19.9L0.0,-19.9L3.0,-19.7L5.7,-18.9L8.2,-17.6L10.5,-15.7L16.2,-10.2L18.1,-8.0L19.5,-5.5L20.3,-2.9L20.6,0.0L20.6,0.0L20.3,2.9L19.5,5.5L18.1,8.0L16.2,10.2L10.5,15.7L8.2,17.6L5.7,18.9L3.0,19.7L0.0,19.9L0.0,19.9L-3.0,19.7L-5.7,18.9L-8.2,17.6L-10.5,15.7L-16.2,10.2L-18.1,8.0L-19.5,5.5L-20.3,2.9L-20.6,0.0L-20.6,0.0L-20.3,-2.9L-19.5,-5.5L-18.1,-8.0L-16.2,-10.2Z" fill="#dfd826"/><path d="M18.7,6.9L18.1,8.0L16.2,10.2L10.5,15.7L8.2,17.6L5.7,18.9L3.0,19.7L0.0,19.9L0.0,19.9L-3.0,19.7L-5.7,18.9L-8.2,17.6L-10.5,15.7L-16.2,10.2L-18.1,8.0L-18.7,6.9L0.0,1.6Z" fill="#fee818"/></g>
<g transform="translate(595.0,401.2) rotate(0.0)"><path d="M-10.7,-15.7L-8.4,-17.6L-5.8,-18.9L-3.0,-19.7L0.0,-19.9L0.0,-19.9L3.0,-19.7L5.8,-18.9L8.4,-17.6L10.7,-15.7L16.5,-10.2L18.4,-8.0L19.8,-5.5L20.6,-2.9L20.9,0.0L20.9,0.0L20.6,2.9L19.8,5.5L18.4,8.0L16.5,10.2L10.7,15.7L8.4,17.6L5.8,18.9L3.0,19.7L0.0,19.9L0.0,19.9L-3.0,19.7L-5.8,18.9L-8.4,17.6L-10.7,15.7L-16.5,10.2L-18.4,8.0L-19.8,5.5L-20.6,2.9L-20.9,0.0L-20.9,0.0L-20.6,-2.9L-19.8,-5.5L-18.4,-8.0L-16.5,-10.2Z" fill="#dfd826"/><path d="M19.0,6.9L18.4,8.0L16.5,10.2L10.7,15.7L8.4,17.6L5.8,18.9L3.0,19.7L0.0,19.9L0.0,19.9L-3.0,19.7L-5.8,18.9L-8.4,17.6L-10.7,15.7L-16.5,10.2L-18.4,8.0L-19.0,6.9L0.0,1.6Z" fill="#fee818"/></g>
<g transform="translate(643.4,401.3) rotate(0.3)"><path d="M-10.5,-15.7L-8.2,-17.6L-5.7,-18.9L-3.0,-19.7L0.0,-19.9L0.0,-19.9L3.0,-19.7L5.7,-18.9L8.2,-17.6L10.5,-15.7L16.2,-10.2L18.1,-8.0L19.5,-5.5L20.3,-2.9L20.6,0.0L20.6,0.0L20.3,2.9L19.5,5.5L18.1,8.0L16.2,10.2L10.5,15.7L8.2,17.6L5.7,18.9L3.0,19.7L0.0,19.9L0.0,19.9L-3.0,19.7L-5.7,18.9L-8.2,17.6L-10.5,15.7L-16.2,10.2L-18.1,8.0L-19.5,5.5L-20.3,2.9L-20.6,0.0L-20.6,0.0L-20.3,-2.9L-19.5,-5.5L-18.1,-8.0L-16.2,-10.2Z" fill="#dfd826"/><path d="M18.7,6.9L18.1,8.0L16.2,10.2L10.5,15.7L8.2,17.6L5.7,18.9L3.0,19.7L0.0,19.9L0.0,19.9L-3.0,19.7L-5.7,18.9L-8.2,17.6L-10.5,15.7L-16.2,10.2L-18.1,8.0L-18.7,6.9L0.0,1.6Z" fill="#fee818"/></g>
<g transform="translate(690.2,401.7) rotate(1.7)"><path d="M-10.0,-15.7L-7.8,-17.6L-5.4,-18.9L-2.8,-19.7L0.0,-19.9L0.0,-19.9L2.8,-19.7L5.4,-18.9L7.8,-17.6L10.0,-15.7L15.4,-10.2L17.2,-8.0L18.5,-5.5L19.3,-2.9L19.5,0.0L19.5,0.0L19.3,2.9L18.5,5.5L17.2,8.0L15.4,10.2L10.0,15.7L7.8,17.6L5.4,18.9L2.8,19.7L0.0,19.9L0.0,19.9L-2.8,19.7L-5.4,18.9L-7.8,17.6L-10.0,15.7L-15.4,10.2L-17.2,8.0L-18.5,5.5L-19.3,2.9L-19.5,0.0L-19.5,0.0L-19.3,-2.9L-18.5,-5.5L-17.2,-8.0L-15.4,-10.2Z" fill="#dfd826"/><path d="M17.8,6.9L17.2,8.0L15.4,10.2L10.0,15.7L7.8,17.6L5.4,18.9L2.8,19.7L0.0,19.9L0.0,19.9L-2.8,19.7L-5.4,18.9L-7.8,17.6L-10.0,15.7L-15.4,10.2L-17.2,8.0L-17.8,6.9L0.0,1.6Z" fill="#fee818"/></g>
<g transform="translate(733.9,402.9) rotate(4.2)"><path d="M-9.2,-15.7L-7.2,-17.6L-5.0,-18.9L-2.6,-19.7L0.0,-19.9L0.0,-19.9L2.6,-19.7L5.0,-18.9L7.2,-17.6L9.2,-15.7L14.1,-10.2L15.8,-8.0L16.9,-5.5L17.7,-2.9L17.9,0.0L17.9,0.0L17.7,2.9L16.9,5.5L15.8,8.0L14.1,10.2L9.2,15.7L7.2,17.6L5.0,18.9L2.6,19.7L0.0,19.9L0.0,19.9L-2.6,19.7L-5.0,18.9L-7.2,17.6L-9.2,15.7L-14.1,10.2L-15.8,8.0L-16.9,5.5L-17.7,2.9L-17.9,0.0L-17.9,0.0L-17.7,-2.9L-16.9,-5.5L-15.8,-8.0L-14.1,-10.2Z" fill="#dfd826"/><path d="M16.3,6.9L15.8,8.0L14.1,10.2L9.2,15.7L7.2,17.6L5.0,18.9L2.6,19.7L0.0,19.9L0.0,19.9L-2.6,19.7L-5.0,18.9L-7.2,17.6L-9.2,15.7L-14.1,10.2L-15.8,8.0L-16.3,6.9L0.0,1.6Z" fill="#fee818"/></g>
<g transform="translate(435.4,440.9) rotate(3.0)"><path d="M-8.7,-16.1L-6.8,-18.0L-4.7,-19.4L-2.4,-20.2L0.0,-20.4L0.0,-20.4L2.4,-20.2L4.7,-19.4L6.8,-18.0L8.7,-16.1L13.3,-10.5L14.9,-8.2L16.0,-5.7L16.7,-3.0L16.9,0.0L16.9,0.0L16.7,3.0L16.0,5.7L14.9,8.2L13.3,10.5L8.7,16.1L6.8,18.0L4.7,19.4L2.4,20.2L0.0,20.4L0.0,20.4L-2.4,20.2L-4.7,19.4L-6.8,18.0L-8.7,16.1L-13.3,10.5L-14.9,8.2L-16.0,5.7L-16.7,3.0L-16.9,0.0L-16.9,0.0L-16.7,-3.0L-16.0,-5.7L-14.9,-8.2L-13.3,-10.5Z" fill="#dfd826"/><path d="M15.4,7.0L14.9,8.2L13.3,10.5L8.7,16.1L6.8,18.0L4.7,19.4L2.4,20.2L0.0,20.4L0.0,20.4L-2.4,20.2L-4.7,19.4L-6.8,18.0L-8.7,16.1L-13.3,10.5L-14.9,8.2L-15.4,7.0L0.0,1.6Z" fill="#fee818"/></g>
<g transform="translate(477.1,441.8) rotate(1.5)"><path d="M-9.7,-16.1L-7.6,-18.0L-5.2,-19.4L-2.7,-20.2L0.0,-20.4L0.0,-20.4L2.7,-20.2L5.2,-19.4L7.6,-18.0L9.7,-16.1L14.9,-10.5L16.6,-8.2L17.9,-5.7L18.6,-3.0L18.9,0.0L18.9,0.0L18.6,3.0L17.9,5.7L16.6,8.2L14.9,10.5L9.7,16.1L7.6,18.0L5.2,19.4L2.7,20.2L0.0,20.4L0.0,20.4L-2.7,20.2L-5.2,19.4L-7.6,18.0L-9.7,16.1L-14.9,10.5L-16.6,8.2L-17.9,5.7L-18.6,3.0L-18.9,0.0L-18.9,0.0L-18.6,-3.0L-17.9,-5.7L-16.6,-8.2L-14.9,-10.5Z" fill="#dfd826"/><path d="M17.2,7.0L16.6,8.2L14.9,10.5L9.7,16.1L7.6,18.0L5.2,19.4L2.7,20.2L0.0,20.4L0.0,20.4L-2.7,20.2L-5.2,19.4L-7.6,18.0L-9.7,16.1L-14.9,10.5L-16.6,8.2L-17.2,7.0L0.0,1.6Z" fill="#fee818"/></g>
<g transform="translate(522.7,442.2) rotate(0.5)"><path d="M-10.3,-16.1L-8.1,-18.0L-5.6,-19.4L-2.9,-20.2L0.0,-20.4L0.0,-20.4L2.9,-20.2L5.6,-19.4L8.1,-18.0L10.3,-16.1L15.9,-10.5L17.8,-8.2L19.1,-5.7L19.9,-3.0L20.2,0.0L20.2,0.0L19.9,3.0L19.1,5.7L17.8,8.2L15.9,10.5L10.3,16.1L8.1,18.0L5.6,19.4L2.9,20.2L0.0,20.4L0.0,20.4L-2.9,20.2L-5.6,19.4L-8.1,18.0L-10.3,16.1L-15.9,10.5L-17.8,8.2L-19.1,5.7L-19.9,3.0L-20.2,0.0L-20.2,0.0L-19.9,-3.0L-19.1,-5.7L-17.8,-8.2L-15.9,-10.5Z" fill="#dfd826"/><path d="M18.4,7.0L17.8,8.2L15.9,10.5L10.3,16.1L8.1,18.0L5.6,19.4L2.9,20.2L0.0,20.4L0.0,20.4L-2.9,20.2L-5.6,19.4L-8.1,18.0L-10.3,16.1L-15.9,10.5L-17.8,8.2L-18.4,7.0L0.0,1.6Z" fill="#fee818"/></g>
<g transform="translate(570.6,442.2) rotate(0.0)"><path d="M-10.7,-16.1L-8.4,-18.0L-5.8,-19.4L-3.0,-20.2L0.0,-20.4L0.0,-20.4L3.0,-20.2L5.8,-19.4L8.4,-18.0L10.7,-16.1L16.4,-10.5L18.4,-8.2L19.8,-5.7L20.6,-3.0L20.9,0.0L20.9,0.0L20.6,3.0L19.8,5.7L18.4,8.2L16.4,10.5L10.7,16.1L8.4,18.0L5.8,19.4L3.0,20.2L0.0,20.4L0.0,20.4L-3.0,20.2L-5.8,19.4L-8.4,18.0L-10.7,16.1L-16.4,10.5L-18.4,8.2L-19.8,5.7L-20.6,3.0L-20.9,0.0L-20.9,0.0L-20.6,-3.0L-19.8,-5.7L-18.4,-8.2L-16.4,-10.5Z" fill="#dfd826"/><path d="M19.0,7.0L18.4,8.2L16.4,10.5L10.7,16.1L8.4,18.0L5.8,19.4L3.0,20.2L0.0,20.4L0.0,20.4L-3.0,20.2L-5.8,19.4L-8.4,18.0L-10.7,16.1L-16.4,10.5L-18.4,8.2L-19.0,7.0L-0.0,1.6Z" fill="#fee818"/></g>
<g transform="translate(619.4,442.2) rotate(-0.0)"><path d="M-10.7,-16.1L-8.4,-18.0L-5.8,-19.4L-3.0,-20.2L0.0,-20.4L0.0,-20.4L3.0,-20.2L5.8,-19.4L8.4,-18.0L10.7,-16.1L16.4,-10.5L18.4,-8.2L19.8,-5.7L20.6,-3.0L20.9,0.0L20.9,0.0L20.6,3.0L19.8,5.7L18.4,8.2L16.4,10.5L10.7,16.1L8.4,18.0L5.8,19.4L3.0,20.2L0.0,20.4L0.0,20.4L-3.0,20.2L-5.8,19.4L-8.4,18.0L-10.7,16.1L-16.4,10.5L-18.4,8.2L-19.8,5.7L-20.6,3.0L-20.9,0.0L-20.9,0.0L-20.6,-3.0L-19.8,-5.7L-18.4,-8.2L-16.4,-10.5Z" fill="#dfd826"/><path d="M19.0,7.0L18.4,8.2L16.4,10.5L10.7,16.1L8.4,18.0L5.8,19.4L3.0,20.2L0.0,20.4L0.0,20.4L-3.0,20.2L-5.8,19.4L-8.4,18.0L-10.7,16.1L-16.4,10.5L-18.4,8.2L-19.0,7.0L-0.0,1.6Z" fill="#fee818"/></g>
<g transform="translate(667.3,442.2) rotate(-0.5)"><path d="M-10.3,-16.1L-8.1,-18.0L-5.6,-19.4L-2.9,-20.2L0.0,-20.4L0.0,-20.4L2.9,-20.2L5.6,-19.4L8.1,-18.0L10.3,-16.1L15.9,-10.5L17.8,-8.2L19.1,-5.7L19.9,-3.0L20.2,0.0L20.2,0.0L19.9,3.0L19.1,5.7L17.8,8.2L15.9,10.5L10.3,16.1L8.1,18.0L5.6,19.4L2.9,20.2L0.0,20.4L0.0,20.4L-2.9,20.2L-5.6,19.4L-8.1,18.0L-10.3,16.1L-15.9,10.5L-17.8,8.2L-19.1,5.7L-19.9,3.0L-20.2,0.0L-20.2,0.0L-19.9,-3.0L-19.1,-5.7L-17.8,-8.2L-15.9,-10.5Z" fill="#dfd826"/><path d="M18.4,7.0L17.8,8.2L15.9,10.5L10.3,16.1L8.1,18.0L5.6,19.4L2.9,20.2L0.0,20.4L0.0,20.4L-2.9,20.2L-5.6,19.4L-8.1,18.0L-10.3,16.1L-15.9,10.5L-17.8,8.2L-18.4,7.0L0.0,1.6Z" fill="#fee818"/></g>
<g transform="translate(712.9,441.8) rotate(-1.5)"><path d="M-9.7,-16.1L-7.6,-18.0L-5.2,-19.4L-2.7,-20.2L0.0,-20.4L0.0,-20.4L2.7,-20.2L5.2,-19.4L7.6,-18.0L9.7,-16.1L14.9,-10.5L16.6,-8.2L17.9,-5.7L18.6,-3.0L18.9,0.0L18.9,0.0L18.6,3.0L17.9,5.7L16.6,8.2L14.9,10.5L9.7,16.1L7.6,18.0L5.2,19.4L2.7,20.2L0.0,20.4L0.0,20.4L-2.7,20.2L-5.2,19.4L-7.6,18.0L-9.7,16.1L-14.9,10.5L-16.6,8.2L-17.9,5.7L-18.6,3.0L-18.9,0.0L-18.9,0.0L-18.6,-3.0L-17.9,-5.7L-16.6,-8.2L-14.9,-10.5Z" fill="#dfd826"/><path d="M17.2,7.0L16.6,8.2L14.9,10.5L9.7,16.1L7.6,18.0L5.2,19.4L2.7,20.2L0.0,20.4L0.0,20.4L-2.7,20.2L-5.2,19.4L-7.6,18.0L-9.7,16.1L-14.9,10.5L-16.6,8.2L-17.2,7.0L0.0,1.6Z" fill="#fee818"/></g>
<g transform="translate(754.6,440.9) rotate(-3.0)"><path d="M-8.7,-16.1L-6.8,-18.0L-4.7,-19.4L-2.4,-20.2L0.0,-20.4L0.0,-20.4L2.4,-20.2L4.7,-19.4L6.8,-18.0L8.7,-16.1L13.3,-10.5L14.9,-8.2L16.0,-5.7L16.7,-3.0L16.9,0.0L16.9,0.0L16.7,3.0L16.0,5.7L14.9,8.2L13.3,10.5L8.7,16.1L6.8,18.0L4.7,19.4L2.4,20.2L0.0,20.4L0.0,20.4L-2.4,20.2L-4.7,19.4L-6.8,18.0L-8.7,16.1L-13.3,10.5L-14.9,8.2L-16.0,5.7L-16.7,3.0L-16.9,0.0L-16.9,0.0L-16.7,-3.0L-16.0,-5.7L-14.9,-8.2L-13.3,-10.5Z" fill="#dfd826"/><path d="M15.4,7.0L14.9,8.2L13.3,10.5L8.7,16.1L6.8,18.0L4.7,19.4L2.4,20.2L0.0,20.4L0.0,20.4L-2.4,20.2L-4.7,19.4L-6.8,18.0L-8.7,16.1L-13.3,10.5L-14.9,8.2L-15.4,7.0L0.0,1.6Z" fill="#fee818"/></g>
<g transform="translate(417.5,475.4) rotate(14.9)"><path d="M-8.0,-15.5L-6.3,-17.3L-4.3,-18.7L-2.3,-19.4L0.0,-19.7L0.0,-19.7L2.3,-19.4L4.3,-18.7L6.3,-17.3L8.0,-15.5L12.3,-10.1L13.8,-7.9L14.8,-5.5L15.4,-2.8L15.6,0.0L15.6,0.0L15.4,2.8L14.8,5.5L13.8,7.9L12.3,10.1L8.0,15.5L6.3,17.3L4.3,18.7L2.3,19.4L0.0,19.7L0.0,19.7L-2.3,19.4L-4.3,18.7L-6.3,17.3L-8.0,15.5L-12.3,10.1L-13.8,7.9L-14.8,5.5L-15.4,2.8L-15.6,0.0L-15.6,0.0L-15.4,-2.8L-14.8,-5.5L-13.8,-7.9L-12.3,-10.1Z" fill="#dfd826"/><path d="M14.2,6.8L13.8,7.9L12.3,10.1L8.0,15.5L6.3,17.3L4.3,18.7L2.3,19.4L0.0,19.7L0.0,19.7L-2.3,19.4L-4.3,18.7L-6.3,17.3L-8.0,15.5L-12.3,10.1L-13.8,7.9L-14.2,6.8L0.0,1.6Z" fill="#fee818"/></g>
<g transform="translate(456.5,479.7) rotate(8.3)"><path d="M-9.1,-15.5L-7.1,-17.3L-5.0,-18.7L-2.6,-19.4L0.0,-19.7L0.0,-19.7L2.6,-19.4L5.0,-18.7L7.1,-17.3L9.1,-15.5L14.1,-10.1L15.7,-7.9L16.9,-5.5L17.6,-2.8L17.8,0.0L17.8,0.0L17.6,2.8L16.9,5.5L15.7,7.9L14.1,10.1L9.1,15.5L7.1,17.3L5.0,18.7L2.6,19.4L0.0,19.7L0.0,19.7L-2.6,19.4L-5.0,18.7L-7.1,17.3L-9.1,15.5L-14.1,10.1L-15.7,7.9L-16.9,5.5L-17.6,2.8L-17.8,0.0L-17.8,0.0L-17.6,-2.8L-16.9,-5.5L-15.7,-7.9L-14.1,-10.1Z" fill="#dfd826"/><path d="M16.3,6.8L15.7,7.9L14.1,10.1L9.1,15.5L7.1,17.3L5.0,18.7L2.6,19.4L0.0,19.7L0.0,19.7L-2.6,19.4L-5.0,18.7L-7.1,17.3L-9.1,15.5L-14.1,10.1L-15.7,7.9L-16.3,6.8L0.0,1.6Z" fill="#fee818"/></g>
<g transform="translate(500.1,482.1) rotate(3.3)"><path d="M-10.0,-15.5L-7.8,-17.3L-5.4,-18.7L-2.8,-19.4L0.0,-19.7L0.0,-19.7L2.8,-19.4L5.4,-18.7L7.8,-17.3L10.0,-15.5L15.3,-10.1L17.2,-7.9L18.4,-5.5L19.2,-2.8L19.5,0.0L19.5,0.0L19.2,2.8L18.4,5.5L17.2,7.9L15.3,10.1L10.0,15.5L7.8,17.3L5.4,18.7L2.8,19.4L0.0,19.7L0.0,19.7L-2.8,19.4L-5.4,18.7L-7.8,17.3L-10.0,15.5L-15.3,10.1L-17.2,7.9L-18.4,5.5L-19.2,2.8L-19.5,0.0L-19.5,0.0L-19.2,-2.8L-18.4,-5.5L-17.2,-7.9L-15.3,-10.1Z" fill="#dfd826"/><path d="M17.8,6.8L17.2,7.9L15.3,10.1L10.0,15.5L7.8,17.3L5.4,18.7L2.8,19.4L0.0,19.7L0.0,19.7L-2.8,19.4L-5.4,18.7L-7.8,17.3L-10.0,15.5L-15.3,10.1L-17.2,7.9L-17.8,6.8L0.0,1.6Z" fill="#fee818"/></g>
<g transform="translate(546.8,482.9) rotate(0.7)"><path d="M-10.5,-15.5L-8.2,-17.3L-5.7,-18.7L-3.0,-19.4L0.0,-19.7L0.0,-19.7L3.0,-19.4L5.7,-18.7L8.2,-17.3L10.5,-15.5L16.1,-10.1L18.0,-7.9L19.4,-5.5L20.2,-2.8L20.5,0.0L20.5,0.0L20.2,2.8L19.4,5.5L18.0,7.9L16.1,10.1L10.5,15.5L8.2,17.3L5.7,18.7L3.0,19.4L0.0,19.7L0.0,19.7L-3.0,19.4L-5.7,18.7L-8.2,17.3L-10.5,15.5L-16.1,10.1L-18.0,7.9L-19.4,5.5L-20.2,2.8L-20.5,0.0L-20.5,0.0L-20.2,-2.8L-19.4,-5.5L-18.0,-7.9L-16.1,-10.1Z" fill="#dfd826"/><path d="M18.7,6.8L18.0,7.9L16.1,10.1L10.5,15.5L8.2,17.3L5.7,18.7L3.0,19.4L0.0,19.7L0.0,19.7L-3.0,19.4L-5.7,18.7L-8.2,17.3L-10.5,15.5L-16.1,10.1L-18.0,7.9L-18.7,6.8L0.0,1.6Z" fill="#fee818"/></g>
<g transform="translate(595.0,483.0) rotate(0.0)"><path d="M-10.7,-15.5L-8.3,-17.3L-5.8,-18.7L-3.0,-19.4L0.0,-19.7L0.0,-19.7L3.0,-19.4L5.8,-18.7L8.3,-17.3L10.7,-15.5L16.4,-10.1L18.3,-7.9L19.7,-5.5L20.6,-2.8L20.8,0.0L20.8,0.0L20.6,2.8L19.7,5.5L18.3,7.9L16.4,10.1L10.7,15.5L8.3,17.3L5.8,18.7L3.0,19.4L0.0,19.7L0.0,19.7L-3.0,19.4L-5.8,18.7L-8.3,17.3L-10.7,15.5L-16.4,10.1L-18.3,7.9L-19.7,5.5L-20.6,2.8L-20.8,0.0L-20.8,0.0L-20.6,-2.8L-19.7,-5.5L-18.3,-7.9L-16.4,-10.1Z" fill="#dfd826"/><path d="M19.0,6.8L18.3,7.9L16.4,10.1L10.7,15.5L8.3,17.3L5.8,18.7L3.0,19.4L0.0,19.7L0.0,19.7L-3.0,19.4L-5.8,18.7L-8.3,17.3L-10.7,15.5L-16.4,10.1L-18.3,7.9L-19.0,6.8L0.0,1.6Z" fill="#fee818"/></g>
<g transform="translate(643.2,482.9) rotate(-0.7)"><path d="M-10.5,-15.5L-8.2,-17.3L-5.7,-18.7L-3.0,-19.4L0.0,-19.7L0.0,-19.7L3.0,-19.4L5.7,-18.7L8.2,-17.3L10.5,-15.5L16.1,-10.1L18.0,-7.9L19.4,-5.5L20.2,-2.8L20.5,0.0L20.5,0.0L20.2,2.8L19.4,5.5L18.0,7.9L16.1,10.1L10.5,15.5L8.2,17.3L5.7,18.7L3.0,19.4L0.0,19.7L0.0,19.7L-3.0,19.4L-5.7,18.7L-8.2,17.3L-10.5,15.5L-16.1,10.1L-18.0,7.9L-19.4,5.5L-20.2,2.8L-20.5,0.0L-20.5,0.0L-20.2,-2.8L-19.4,-5.5L-18.0,-7.9L-16.1,-10.1Z" fill="#dfd826"/><path d="M18.7,6.8L18.0,7.9L16.1,10.1L10.5,15.5L8.2,17.3L5.7,18.7L3.0,19.4L0.0,19.7L0.0,19.7L-3.0,19.4L-5.7,18.7L-8.2,17.3L-10.5,15.5L-16.1,10.1L-18.0,7.9L-18.7,6.8L0.0,1.6Z" fill="#fee818"/></g>
<g transform="translate(689.9,482.1) rotate(-3.3)"><path d="M-10.0,-15.5L-7.8,-17.3L-5.4,-18.7L-2.8,-19.4L0.0,-19.7L0.0,-19.7L2.8,-19.4L5.4,-18.7L7.8,-17.3L10.0,-15.5L15.3,-10.1L17.2,-7.9L18.4,-5.5L19.2,-2.8L19.5,0.0L19.5,0.0L19.2,2.8L18.4,5.5L17.2,7.9L15.3,10.1L10.0,15.5L7.8,17.3L5.4,18.7L2.8,19.4L0.0,19.7L0.0,19.7L-2.8,19.4L-5.4,18.7L-7.8,17.3L-10.0,15.5L-15.3,10.1L-17.2,7.9L-18.4,5.5L-19.2,2.8L-19.5,0.0L-19.5,0.0L-19.2,-2.8L-18.4,-5.5L-17.2,-7.9L-15.3,-10.1Z" fill="#dfd826"/><path d="M17.8,6.8L17.2,7.9L15.3,10.1L10.0,15.5L7.8,17.3L5.4,18.7L2.8,19.4L0.0,19.7L0.0,19.7L-2.8,19.4L-5.4,18.7L-7.8,17.3L-10.0,15.5L-15.3,10.1L-17.2,7.9L-17.8,6.8L0.0,1.6Z" fill="#fee818"/></g>
<g transform="translate(733.5,479.7) rotate(-8.3)"><path d="M-9.1,-15.5L-7.1,-17.3L-5.0,-18.7L-2.6,-19.4L0.0,-19.7L0.0,-19.7L2.6,-19.4L5.0,-18.7L7.1,-17.3L9.1,-15.5L14.1,-10.1L15.7,-7.9L16.9,-5.5L17.6,-2.8L17.8,0.0L17.8,0.0L17.6,2.8L16.9,5.5L15.7,7.9L14.1,10.1L9.1,15.5L7.1,17.3L5.0,18.7L2.6,19.4L0.0,19.7L0.0,19.7L-2.6,19.4L-5.0,18.7L-7.1,17.3L-9.1,15.5L-14.1,10.1L-15.7,7.9L-16.9,5.5L-17.6,2.8L-17.8,0.0L-17.8,0.0L-17.6,-2.8L-16.9,-5.5L-15.7,-7.9L-14.1,-10.1Z" fill="#dfd826"/><path d="M16.3,6.8L15.7,7.9L14.1,10.1L9.1,15.5L7.1,17.3L5.0,18.7L2.6,19.4L0.0,19.7L0.0,19.7L-2.6,19.4L-5.0,18.7L-7.1,17.3L-9.1,15.5L-14.1,10.1L-15.7,7.9L-16.3,6.8L0.0,1.6Z" fill="#fee818"/></g>
<g transform="translate(440.4,513.0) rotate(18.0)"><path d="M-8.4,-13.9L-6.6,-15.6L-4.6,-16.8L-2.4,-17.5L0.0,-17.7L0.0,-17.7L2.4,-17.5L4.6,-16.8L6.6,-15.6L8.4,-13.9L12.9,-9.1L14.4,-7.1L15.5,-4.9L16.2,-2.6L16.4,0.0L16.4,0.0L16.2,2.6L15.5,4.9L14.4,7.1L12.9,9.1L8.4,13.9L6.6,15.6L4.6,16.8L2.4,17.5L0.0,17.7L0.0,17.7L-2.4,17.5L-4.6,16.8L-6.6,15.6L-8.4,13.9L-12.9,9.1L-14.4,7.1L-15.5,4.9L-16.2,2.6L-16.4,0.0L-16.4,0.0L-16.2,-2.6L-15.5,-4.9L-14.4,-7.1L-12.9,-9.1Z" fill="#dfd826"/><path d="M14.9,6.1L14.4,7.1L12.9,9.1L8.4,13.9L6.6,15.6L4.6,16.8L2.4,17.5L0.0,17.7L0.0,17.7L-2.4,17.5L-4.6,16.8L-6.6,15.6L-8.4,13.9L-12.9,9.1L-14.4,7.1L-14.9,6.1L0.0,1.4Z" fill="#fee818"/></g>
<g transform="translate(480.8,518.1) rotate(8.8)"><path d="M-9.4,-13.9L-7.3,-15.6L-5.1,-16.8L-2.6,-17.5L0.0,-17.7L0.0,-17.7L2.6,-17.5L5.1,-16.8L7.3,-15.6L9.4,-13.9L14.4,-9.1L16.1,-7.1L17.3,-4.9L18.0,-2.6L18.3,0.0L18.3,0.0L18.0,2.6L17.3,4.9L16.1,7.1L14.4,9.1L9.4,13.9L7.3,15.6L5.1,16.8L2.6,17.5L0.0,17.7L0.0,17.7L-2.6,17.5L-5.1,16.8L-7.3,15.6L-9.4,13.9L-14.4,9.1L-16.1,7.1L-17.3,4.9L-18.0,2.6L-18.3,0.0L-18.3,0.0L-18.0,-2.6L-17.3,-4.9L-16.1,-7.1L-14.4,-9.1Z" fill="#dfd826"/><path d="M16.6,6.1L16.1,7.1L14.4,9.1L9.4,13.9L7.3,15.6L5.1,16.8L2.6,17.5L0.0,17.7L0.0,17.7L-2.6,17.5L-5.1,16.8L-7.3,15.6L-9.4,13.9L-14.4,9.1L-16.1,7.1L-16.6,6.1L0.0,1.4Z" fill="#fee818"/></g>
<g transform="translate(525.0,520.5) rotate(2.7)"><path d="M-10.0,-13.9L-7.8,-15.6L-5.4,-16.8L-2.8,-17.5L0.0,-17.7L0.0,-17.7L2.8,-17.5L5.4,-16.8L7.8,-15.6L10.0,-13.9L15.4,-9.1L17.2,-7.1L18.5,-4.9L19.3,-2.6L19.6,0.0L19.6,0.0L19.3,2.6L18.5,4.9L17.2,7.1L15.4,9.1L10.0,13.9L7.8,15.6L5.4,16.8L2.8,17.5L0.0,17.7L0.0,17.7L-2.8,17.5L-5.4,16.8L-7.8,15.6L-10.0,13.9L-15.4,9.1L-17.2,7.1L-18.5,4.9L-19.3,2.6L-19.6,0.0L-19.6,0.0L-19.3,-2.6L-18.5,-4.9L-17.2,-7.1L-15.4,-9.1Z" fill="#dfd826"/><path d="M17.8,6.1L17.2,7.1L15.4,9.1L10.0,13.9L7.8,15.6L5.4,16.8L2.8,17.5L0.0,17.7L0.0,17.7L-2.8,17.5L-5.4,16.8L-7.8,15.6L-10.0,13.9L-15.4,9.1L-17.2,7.1L-17.8,6.1L0.0,1.4Z" fill="#fee818"/></g>
<g transform="translate(571.4,521.0) rotate(0.2)"><path d="M-10.4,-13.9L-8.1,-15.6L-5.6,-16.8L-2.9,-17.5L0.0,-17.7L0.0,-17.7L2.9,-17.5L5.6,-16.8L8.1,-15.6L10.4,-13.9L15.9,-9.1L17.8,-7.1L19.1,-4.9L19.9,-2.6L20.2,0.0L20.2,0.0L19.9,2.6L19.1,4.9L17.8,7.1L15.9,9.1L10.4,13.9L8.1,15.6L5.6,16.8L2.9,17.5L0.0,17.7L0.0,17.7L-2.9,17.5L-5.6,16.8L-8.1,15.6L-10.4,13.9L-15.9,9.1L-17.8,7.1L-19.1,4.9L-19.9,2.6L-20.2,0.0L-20.2,0.0L-19.9,-2.6L-19.1,-4.9L-17.8,-7.1L-15.9,-9.1Z" fill="#dfd826"/><path d="M18.4,6.1L17.8,7.1L15.9,9.1L10.4,13.9L8.1,15.6L5.6,16.8L2.9,17.5L0.0,17.7L0.0,17.7L-2.9,17.5L-5.6,16.8L-8.1,15.6L-10.4,13.9L-15.9,9.1L-17.8,7.1L-18.4,6.1L0.0,1.4Z" fill="#fee818"/></g>
<g transform="translate(618.6,521.0) rotate(-0.2)"><path d="M-10.4,-13.9L-8.1,-15.6L-5.6,-16.8L-2.9,-17.5L0.0,-17.7L0.0,-17.7L2.9,-17.5L5.6,-16.8L8.1,-15.6L10.4,-13.9L15.9,-9.1L17.8,-7.1L19.1,-4.9L19.9,-2.6L20.2,0.0L20.2,0.0L19.9,2.6L19.1,4.9L17.8,7.1L15.9,9.1L10.4,13.9L8.1,15.6L5.6,16.8L2.9,17.5L0.0,17.7L0.0,17.7L-2.9,17.5L-5.6,16.8L-8.1,15.6L-10.4,13.9L-15.9,9.1L-17.8,7.1L-19.1,4.9L-19.9,2.6L-20.2,0.0L-20.2,0.0L-19.9,-2.6L-19.1,-4.9L-17.8,-7.1L-15.9,-9.1Z" fill="#dfd826"/><path d="M18.4,6.1L17.8,7.1L15.9,9.1L10.4,13.9L8.1,15.6L5.6,16.8L2.9,17.5L0.0,17.7L0.0,17.7L-2.9,17.5L-5.6,16.8L-8.1,15.6L-10.4,13.9L-15.9,9.1L-17.8,7.1L-18.4,6.1L0.0,1.4Z" fill="#fee818"/></g>
<g transform="translate(665.0,520.5) rotate(-2.7)"><path d="M-10.0,-13.9L-7.8,-15.6L-5.4,-16.8L-2.8,-17.5L0.0,-17.7L0.0,-17.7L2.8,-17.5L5.4,-16.8L7.8,-15.6L10.0,-13.9L15.4,-9.1L17.2,-7.1L18.5,-4.9L19.3,-2.6L19.6,0.0L19.6,0.0L19.3,2.6L18.5,4.9L17.2,7.1L15.4,9.1L10.0,13.9L7.8,15.6L5.4,16.8L2.8,17.5L0.0,17.7L0.0,17.7L-2.8,17.5L-5.4,16.8L-7.8,15.6L-10.0,13.9L-15.4,9.1L-17.2,7.1L-18.5,4.9L-19.3,2.6L-19.6,0.0L-19.6,0.0L-19.3,-2.6L-18.5,-4.9L-17.2,-7.1L-15.4,-9.1Z" fill="#dfd826"/><path d="M17.8,6.1L17.2,7.1L15.4,9.1L10.0,13.9L7.8,15.6L5.4,16.8L2.8,17.5L0.0,17.7L0.0,17.7L-2.8,17.5L-5.4,16.8L-7.8,15.6L-10.0,13.9L-15.4,9.1L-17.2,7.1L-17.8,6.1L0.0,1.4Z" fill="#fee818"/></g>
<g transform="translate(709.2,518.1) rotate(-8.8)"><path d="M-9.4,-13.9L-7.3,-15.6L-5.1,-16.8L-2.6,-17.5L0.0,-17.7L0.0,-17.7L2.6,-17.5L5.1,-16.8L7.3,-15.6L9.4,-13.9L14.4,-9.1L16.1,-7.1L17.3,-4.9L18.0,-2.6L18.3,0.0L18.3,0.0L18.0,2.6L17.3,4.9L16.1,7.1L14.4,9.1L9.4,13.9L7.3,15.6L5.1,16.8L2.6,17.5L0.0,17.7L0.0,17.7L-2.6,17.5L-5.1,16.8L-7.3,15.6L-9.4,13.9L-14.4,9.1L-16.1,7.1L-17.3,4.9L-18.0,2.6L-18.3,0.0L-18.3,0.0L-18.0,-2.6L-17.3,-4.9L-16.1,-7.1L-14.4,-9.1Z" fill="#dfd826"/><path d="M16.6,6.1L16.1,7.1L14.4,9.1L9.4,13.9L7.3,15.6L5.1,16.8L2.6,17.5L0.0,17.7L0.0,17.7L-2.6,17.5L-5.1,16.8L-7.3,15.6L-9.4,13.9L-14.4,9.1L-16.1,7.1L-16.6,6.1L0.0,1.4Z" fill="#fee818"/></g>
<g transform="translate(749.6,513.0) rotate(-18.0)"><path d="M-8.4,-13.9L-6.6,-15.6L-4.6,-16.8L-2.4,-17.5L0.0,-17.7L0.0,-17.7L2.4,-17.5L4.6,-16.8L6.6,-15.6L8.4,-13.9L12.9,-9.1L14.4,-7.1L15.5,-4.9L16.2,-2.6L16.4,0.0L16.4,0.0L16.2,2.6L15.5,4.9L14.4,7.1L12.9,9.1L8.4,13.9L6.6,15.6L4.6,16.8L2.4,17.5L0.0,17.7L0.0,17.7L-2.4,17.5L-4.6,16.8L-6.6,15.6L-8.4,13.9L-12.9,9.1L-14.4,7.1L-15.5,4.9L-16.2,2.6L-16.4,0.0L-16.4,0.0L-16.2,-2.6L-15.5,-4.9L-14.4,-7.1L-12.9,-9.1Z" fill="#dfd826"/><path d="M14.9,6.1L14.4,7.1L12.9,9.1L8.4,13.9L6.6,15.6L4.6,16.8L2.4,17.5L0.0,17.7L0.0,17.7L-2.4,17.5L-4.6,16.8L-6.6,15.6L-8.4,13.9L-12.9,9.1L-14.4,7.1L-14.9,6.1L0.0,1.4Z" fill="#fee818"/></g>
<g transform="translate(424.3,540.5) rotate(30.9)"><path d="M-7.7,-13.2L-6.0,-14.7L-4.2,-15.8L-2.2,-16.5L0.0,-16.7L0.0,-16.7L2.2,-16.5L4.2,-15.8L6.0,-14.7L7.7,-13.2L11.8,-8.6L13.2,-6.7L14.2,-4.6L14.8,-2.4L15.0,0.0L15.0,0.0L14.8,2.4L14.2,4.6L13.2,6.7L11.8,8.6L7.7,13.2L6.0,14.7L4.2,15.8L2.2,16.5L0.0,16.7L0.0,16.7L-2.2,16.5L-4.2,15.8L-6.0,14.7L-7.7,13.2L-11.8,8.6L-13.2,6.7L-14.2,4.6L-14.8,2.4L-15.0,0.0L-15.0,0.0L-14.8,-2.4L-14.2,-4.6L-13.2,-6.7L-11.8,-8.6Z" fill="#dfd826"/><path d="M13.7,5.7L13.2,6.7L11.8,8.6L7.7,13.2L6.0,14.7L4.2,15.8L2.2,16.5L0.0,16.7L0.0,16.7L-2.2,16.5L-4.2,15.8L-6.0,14.7L-7.7,13.2L-11.8,8.6L-13.2,6.7L-13.7,5.7L0.0,1.3Z" fill="#fee818"/></g>
<g transform="translate(461.9,549.3) rotate(17.4)"><path d="M-8.8,-13.2L-6.9,-14.7L-4.8,-15.8L-2.5,-16.5L0.0,-16.7L0.0,-16.7L2.5,-16.5L4.8,-15.8L6.9,-14.7L8.8,-13.2L13.5,-8.6L15.1,-6.7L16.2,-4.6L16.9,-2.4L17.1,0.0L17.1,0.0L16.9,2.4L16.2,4.6L15.1,6.7L13.5,8.6L8.8,13.2L6.9,14.7L4.8,15.8L2.5,16.5L0.0,16.7L0.0,16.7L-2.5,16.5L-4.8,15.8L-6.9,14.7L-8.8,13.2L-13.5,8.6L-15.1,6.7L-16.2,4.6L-16.9,2.4L-17.1,0.0L-17.1,0.0L-16.9,-2.4L-16.2,-4.6L-15.1,-6.7L-13.5,-8.6Z" fill="#dfd826"/><path d="M15.6,5.7L15.1,6.7L13.5,8.6L8.8,13.2L6.9,14.7L4.8,15.8L2.5,16.5L0.0,16.7L0.0,16.7L-2.5,16.5L-4.8,15.8L-6.9,14.7L-8.8,13.2L-13.5,8.6L-15.1,6.7L-15.6,5.7L0.0,1.3Z" fill="#fee818"/></g>
<g transform="translate(503.8,554.2) rotate(7.1)"><path d="M-9.6,-13.2L-7.5,-14.7L-5.2,-15.8L-2.7,-16.5L0.0,-16.7L0.0,-16.7L2.7,-16.5L5.2,-15.8L7.5,-14.7L9.6,-13.2L14.8,-8.6L16.5,-6.7L17.7,-4.6L18.5,-2.4L18.7,0.0L18.7,0.0L18.5,2.4L17.7,4.6L16.5,6.7L14.8,8.6L9.6,13.2L7.5,14.7L5.2,15.8L2.7,16.5L0.0,16.7L0.0,16.7L-2.7,16.5L-5.2,15.8L-7.5,14.7L-9.6,13.2L-14.8,8.6L-16.5,6.7L-17.7,4.6L-18.5,2.4L-18.7,0.0L-18.7,0.0L-18.5,-2.4L-17.7,-4.6L-16.5,-6.7L-14.8,-8.6Z" fill="#dfd826"/><path d="M17.1,5.7L16.5,6.7L14.8,8.6L9.6,13.2L7.5,14.7L5.2,15.8L2.7,16.5L0.0,16.7L0.0,16.7L-2.7,16.5L-5.2,15.8L-7.5,14.7L-9.6,13.2L-14.8,8.6L-16.5,6.7L-17.1,5.7L0.0,1.3Z" fill="#fee818"/></g>
<g transform="translate(548.6,555.8) rotate(1.4)"><path d="M-10.1,-13.2L-7.9,-14.7L-5.5,-15.8L-2.8,-16.5L0.0,-16.7L0.0,-16.7L2.8,-16.5L5.5,-15.8L7.9,-14.7L10.1,-13.2L15.5,-8.6L17.3,-6.7L18.6,-4.6L19.4,-2.4L19.7,0.0L19.7,0.0L19.4,2.4L18.6,4.6L17.3,6.7L15.5,8.6L10.1,13.2L7.9,14.7L5.5,15.8L2.8,16.5L0.0,16.7L0.0,16.7L-2.8,16.5L-5.5,15.8L-7.9,14.7L-10.1,13.2L-15.5,8.6L-17.3,6.7L-18.6,4.6L-19.4,2.4L-19.7,0.0L-19.7,0.0L-19.4,-2.4L-18.6,-4.6L-17.3,-6.7L-15.5,-8.6Z" fill="#dfd826"/><path d="M17.9,5.7L17.3,6.7L15.5,8.6L10.1,13.2L7.9,14.7L5.5,15.8L2.8,16.5L0.0,16.7L0.0,16.7L-2.8,16.5L-5.5,15.8L-7.9,14.7L-10.1,13.2L-15.5,8.6L-17.3,6.7L-17.9,5.7L0.0,1.3Z" fill="#fee818"/></g>
<g transform="translate(595.0,556.0) rotate(0.0)"><path d="M-10.3,-13.2L-8.0,-14.7L-5.6,-15.8L-2.9,-16.5L0.0,-16.7L0.0,-16.7L2.9,-16.5L5.6,-15.8L8.0,-14.7L10.3,-13.2L15.8,-8.6L17.6,-6.7L19.0,-4.6L19.8,-2.4L20.0,0.0L20.0,0.0L19.8,2.4L19.0,4.6L17.6,6.7L15.8,8.6L10.3,13.2L8.0,14.7L5.6,15.8L2.9,16.5L0.0,16.7L0.0,16.7L-2.9,16.5L-5.6,15.8L-8.0,14.7L-10.3,13.2L-15.8,8.6L-17.6,6.7L-19.0,4.6L-19.8,2.4L-20.0,0.0L-20.0,0.0L-19.8,-2.4L-19.0,-4.6L-17.6,-6.7L-15.8,-8.6Z" fill="#dfd826"/><path d="M18.2,5.7L17.6,6.7L15.8,8.6L10.3,13.2L8.0,14.7L5.6,15.8L2.9,16.5L0.0,16.7L0.0,16.7L-2.9,16.5L-5.6,15.8L-8.0,14.7L-10.3,13.2L-15.8,8.6L-17.6,6.7L-18.2,5.7L0.0,1.3Z" fill="#fee818"/></g>
<g transform="translate(641.4,555.8) rotate(-1.4)"><path d="M-10.1,-13.2L-7.9,-14.7L-5.5,-15.8L-2.8,-16.5L0.0,-16.7L0.0,-16.7L2.8,-16.5L5.5,-15.8L7.9,-14.7L10.1,-13.2L15.5,-8.6L17.3,-6.7L18.6,-4.6L19.4,-2.4L19.7,0.0L19.7,0.0L19.4,2.4L18.6,4.6L17.3,6.7L15.5,8.6L10.1,13.2L7.9,14.7L5.5,15.8L2.8,16.5L0.0,16.7L0.0,16.7L-2.8,16.5L-5.5,15.8L-7.9,14.7L-10.1,13.2L-15.5,8.6L-17.3,6.7L-18.6,4.6L-19.4,2.4L-19.7,0.0L-19.7,0.0L-19.4,-2.4L-18.6,-4.6L-17.3,-6.7L-15.5,-8.6Z" fill="#dfd826"/><path d="M17.9,5.7L17.3,6.7L15.5,8.6L10.1,13.2L7.9,14.7L5.5,15.8L2.8,16.5L0.0,16.7L0.0,16.7L-2.8,16.5L-5.5,15.8L-7.9,14.7L-10.1,13.2L-15.5,8.6L-17.3,6.7L-17.9,5.7L0.0,1.3Z" fill="#fee818"/></g>
<g transform="translate(686.2,554.2) rotate(-7.1)"><path d="M-9.6,-13.2L-7.5,-14.7L-5.2,-15.8L-2.7,-16.5L0.0,-16.7L0.0,-16.7L2.7,-16.5L5.2,-15.8L7.5,-14.7L9.6,-13.2L14.8,-8.6L16.5,-6.7L17.7,-4.6L18.5,-2.4L18.7,0.0L18.7,0.0L18.5,2.4L17.7,4.6L16.5,6.7L14.8,8.6L9.6,13.2L7.5,14.7L5.2,15.8L2.7,16.5L0.0,16.7L0.0,16.7L-2.7,16.5L-5.2,15.8L-7.5,14.7L-9.6,13.2L-14.8,8.6L-16.5,6.7L-17.7,4.6L-18.5,2.4L-18.7,0.0L-18.7,0.0L-18.5,-2.4L-17.7,-4.6L-16.5,-6.7L-14.8,-8.6Z" fill="#dfd826"/><path d="M17.1,5.7L16.5,6.7L14.8,8.6L9.6,13.2L7.5,14.7L5.2,15.8L2.7,16.5L0.0,16.7L0.0,16.7L-2.7,16.5L-5.2,15.8L-7.5,14.7L-9.6,13.2L-14.8,8.6L-16.5,6.7L-17.1,5.7L0.0,1.3Z" fill="#fee818"/></g>
<g transform="translate(728.1,549.3) rotate(-17.4)"><path d="M-8.8,-13.2L-6.9,-14.7L-4.8,-15.8L-2.5,-16.5L0.0,-16.7L0.0,-16.7L2.5,-16.5L4.8,-15.8L6.9,-14.7L8.8,-13.2L13.5,-8.6L15.1,-6.7L16.2,-4.6L16.9,-2.4L17.1,0.0L17.1,0.0L16.9,2.4L16.2,4.6L15.1,6.7L13.5,8.6L8.8,13.2L6.9,14.7L4.8,15.8L2.5,16.5L0.0,16.7L0.0,16.7L-2.5,16.5L-4.8,15.8L-6.9,14.7L-8.8,13.2L-13.5,8.6L-15.1,6.7L-16.2,4.6L-16.9,2.4L-17.1,0.0L-17.1,0.0L-16.9,-2.4L-16.2,-4.6L-15.1,-6.7L-13.5,-8.6Z" fill="#dfd826"/><path d="M15.6,5.7L15.1,6.7L13.5,8.6L8.8,13.2L6.9,14.7L4.8,15.8L2.5,16.5L0.0,16.7L0.0,16.7L-2.5,16.5L-4.8,15.8L-6.9,14.7L-8.8,13.2L-13.5,8.6L-15.1,6.7L-15.6,5.7L0.0,1.3Z" fill="#fee818"/></g>
<g transform="translate(418.1,564.6) rotate(40.7)"><path d="M-6.7,-10.2L-5.2,-11.4L-3.6,-12.3L-1.9,-12.8L0.0,-12.9L0.0,-12.9L1.9,-12.8L3.6,-12.3L5.2,-11.4L6.7,-10.2L10.2,-6.6L11.4,-5.2L12.3,-3.6L12.8,-1.9L13.0,0.0L13.0,0.0L12.8,1.9L12.3,3.6L11.4,5.2L10.2,6.6L6.7,10.2L5.2,11.4L3.6,12.3L1.9,12.8L0.0,12.9L0.0,12.9L-1.9,12.8L-3.6,12.3L-5.2,11.4L-6.7,10.2L-10.2,6.6L-11.4,5.2L-12.3,3.6L-12.8,1.9L-13.0,0.0L-13.0,0.0L-12.8,-1.9L-12.3,-3.6L-11.4,-5.2L-10.2,-6.6Z" fill="#dfd826"/><path d="M11.8,4.5L11.4,5.2L10.2,6.6L6.7,10.2L5.2,11.4L3.6,12.3L1.9,12.8L0.0,12.9L0.0,12.9L-1.9,12.8L-3.6,12.3L-5.2,11.4L-6.7,10.2L-10.2,6.6L-11.4,5.2L-11.8,4.5L-0.0,1.0Z" fill="#fee818"/></g>
<g transform="translate(451.0,575.5) rotate(25.6)"><path d="M-7.8,-10.2L-6.1,-11.4L-4.2,-12.3L-2.2,-12.8L0.0,-12.9L0.0,-12.9L2.2,-12.8L4.2,-12.3L6.1,-11.4L7.8,-10.2L12.0,-6.6L13.4,-5.2L14.4,-3.6L15.0,-1.9L15.2,0.0L15.2,0.0L15.0,1.9L14.4,3.6L13.4,5.2L12.0,6.6L7.8,10.2L6.1,11.4L4.2,12.3L2.2,12.8L0.0,12.9L0.0,12.9L-2.2,12.8L-4.2,12.3L-6.1,11.4L-7.8,10.2L-12.0,6.6L-13.4,5.2L-14.4,3.6L-15.0,1.9L-15.2,0.0L-15.2,0.0L-15.0,-1.9L-14.4,-3.6L-13.4,-5.2L-12.0,-6.6Z" fill="#dfd826"/><path d="M13.9,4.5L13.4,5.2L12.0,6.6L7.8,10.2L6.1,11.4L4.2,12.3L2.2,12.8L0.0,12.9L0.0,12.9L-2.2,12.8L-4.2,12.3L-6.1,11.4L-7.8,10.2L-12.0,6.6L-13.4,5.2L-13.9,4.5L0.0,1.0Z" fill="#fee818"/></g>
<g transform="translate(488.7,582.4) rotate(12.6)"><path d="M-8.7,-10.2L-6.8,-11.4L-4.7,-12.3L-2.5,-12.8L0.0,-12.9L0.0,-12.9L2.5,-12.8L4.7,-12.3L6.8,-11.4L8.7,-10.2L13.4,-6.6L15.0,-5.2L16.1,-3.6L16.8,-1.9L17.0,0.0L17.0,0.0L16.8,1.9L16.1,3.6L15.0,5.2L13.4,6.6L8.7,10.2L6.8,11.4L4.7,12.3L2.5,12.8L0.0,12.9L0.0,12.9L-2.5,12.8L-4.7,12.3L-6.8,11.4L-8.7,10.2L-13.4,6.6L-15.0,5.2L-16.1,3.6L-16.8,1.9L-17.0,0.0L-17.0,0.0L-16.8,-1.9L-16.1,-3.6L-15.0,-5.2L-13.4,-6.6Z" fill="#dfd826"/><path d="M15.5,4.5L15.0,5.2L13.4,6.6L8.7,10.2L6.8,11.4L4.7,12.3L2.5,12.8L0.0,12.9L0.0,12.9L-2.5,12.8L-4.7,12.3L-6.8,11.4L-8.7,10.2L-13.4,6.6L-15.0,5.2L-15.5,4.5L0.0,1.0Z" fill="#fee818"/></g>
<g transform="translate(529.8,585.5) rotate(3.9)"><path d="M-9.3,-10.2L-7.3,-11.4L-5.1,-12.3L-2.6,-12.8L0.0,-12.9L0.0,-12.9L2.6,-12.8L5.1,-12.3L7.3,-11.4L9.3,-10.2L14.3,-6.6L16.0,-5.2L17.2,-3.6L18.0,-1.9L18.2,0.0L18.2,0.0L18.0,1.9L17.2,3.6L16.0,5.2L14.3,6.6L9.3,10.2L7.3,11.4L5.1,12.3L2.6,12.8L0.0,12.9L0.0,12.9L-2.6,12.8L-5.1,12.3L-7.3,11.4L-9.3,10.2L-14.3,6.6L-16.0,5.2L-17.2,3.6L-18.0,1.9L-18.2,0.0L-18.2,0.0L-18.0,-1.9L-17.2,-3.6L-16.0,-5.2L-14.3,-6.6Z" fill="#dfd826"/><path d="M16.6,4.5L16.0,5.2L14.3,6.6L9.3,10.2L7.3,11.4L5.1,12.3L2.6,12.8L0.0,12.9L0.0,12.9L-2.6,12.8L-5.1,12.3L-7.3,11.4L-9.3,10.2L-14.3,6.6L-16.0,5.2L-16.6,4.5L0.0,1.0Z" fill="#fee818"/></g>
<g transform="translate(573.0,586.2) rotate(0.3)"><path d="M-9.6,-10.2L-7.5,-11.4L-5.2,-12.3L-2.7,-12.8L0.0,-12.9L0.0,-12.9L2.7,-12.8L5.2,-12.3L7.5,-11.4L9.6,-10.2L14.8,-6.6L16.6,-5.2L17.8,-3.6L18.6,-1.9L18.8,0.0L18.8,0.0L18.6,1.9L17.8,3.6L16.6,5.2L14.8,6.6L9.6,10.2L7.5,11.4L5.2,12.3L2.7,12.8L0.0,12.9L0.0,12.9L-2.7,12.8L-5.2,12.3L-7.5,11.4L-9.6,10.2L-14.8,6.6L-16.6,5.2L-17.8,3.6L-18.6,1.9L-18.8,0.0L-18.8,0.0L-18.6,-1.9L-17.8,-3.6L-16.6,-5.2L-14.8,-6.6Z" fill="#dfd826"/><path d="M17.2,4.5L16.6,5.2L14.8,6.6L9.6,10.2L7.5,11.4L5.2,12.3L2.7,12.8L0.0,12.9L0.0,12.9L-2.7,12.8L-5.2,12.3L-7.5,11.4L-9.6,10.2L-14.8,6.6L-16.6,5.2L-17.2,4.5L0.0,1.0Z" fill="#fee818"/></g>
<g transform="translate(617.0,586.2) rotate(-0.3)"><path d="M-9.6,-10.2L-7.5,-11.4L-5.2,-12.3L-2.7,-12.8L0.0,-12.9L0.0,-12.9L2.7,-12.8L5.2,-12.3L7.5,-11.4L9.6,-10.2L14.8,-6.6L16.6,-5.2L17.8,-3.6L18.6,-1.9L18.8,0.0L18.8,0.0L18.6,1.9L17.8,3.6L16.6,5.2L14.8,6.6L9.6,10.2L7.5,11.4L5.2,12.3L2.7,12.8L0.0,12.9L0.0,12.9L-2.7,12.8L-5.2,12.3L-7.5,11.4L-9.6,10.2L-14.8,6.6L-16.6,5.2L-17.8,3.6L-18.6,1.9L-18.8,0.0L-18.8,0.0L-18.6,-1.9L-17.8,-3.6L-16.6,-5.2L-14.8,-6.6Z" fill="#dfd826"/><path d="M17.2,4.5L16.6,5.2L14.8,6.6L9.6,10.2L7.5,11.4L5.2,12.3L2.7,12.8L0.0,12.9L0.0,12.9L-2.7,12.8L-5.2,12.3L-7.5,11.4L-9.6,10.2L-14.8,6.6L-16.6,5.2L-17.2,4.5L0.0,1.0Z" fill="#fee818"/></g>
<g transform="translate(660.2,585.5) rotate(-3.9)"><path d="M-9.3,-10.2L-7.3,-11.4L-5.1,-12.3L-2.6,-12.8L0.0,-12.9L0.0,-12.9L2.6,-12.8L5.1,-12.3L7.3,-11.4L9.3,-10.2L14.3,-6.6L16.0,-5.2L17.2,-3.6L18.0,-1.9L18.2,0.0L18.2,0.0L18.0,1.9L17.2,3.6L16.0,5.2L14.3,6.6L9.3,10.2L7.3,11.4L5.1,12.3L2.6,12.8L0.0,12.9L0.0,12.9L-2.6,12.8L-5.1,12.3L-7.3,11.4L-9.3,10.2L-14.3,6.6L-16.0,5.2L-17.2,3.6L-18.0,1.9L-18.2,0.0L-18.2,0.0L-18.0,-1.9L-17.2,-3.6L-16.0,-5.2L-14.3,-6.6Z" fill="#dfd826"/><path d="M16.6,4.5L16.0,5.2L14.3,6.6L9.3,10.2L7.3,11.4L5.1,12.3L2.6,12.8L0.0,12.9L0.0,12.9L-2.6,12.8L-5.1,12.3L-7.3,11.4L-9.3,10.2L-14.3,6.6L-16.0,5.2L-16.6,4.5L0.0,1.0Z" fill="#fee818"/></g>
<g transform="translate(701.3,582.4) rotate(-12.6)"><path d="M-8.7,-10.2L-6.8,-11.4L-4.7,-12.3L-2.5,-12.8L0.0,-12.9L0.0,-12.9L2.5,-12.8L4.7,-12.3L6.8,-11.4L8.7,-10.2L13.4,-6.6L15.0,-5.2L16.1,-3.6L16.8,-1.9L17.0,0.0L17.0,0.0L16.8,1.9L16.1,3.6L15.0,5.2L13.4,6.6L8.7,10.2L6.8,11.4L4.7,12.3L2.5,12.8L0.0,12.9L0.0,12.9L-2.5,12.8L-4.7,12.3L-6.8,11.4L-8.7,10.2L-13.4,6.6L-15.0,5.2L-16.1,3.6L-16.8,1.9L-17.0,0.0L-17.0,0.0L-16.8,-1.9L-16.1,-3.6L-15.0,-5.2L-13.4,-6.6Z" fill="#dfd826"/><path d="M15.5,4.5L15.0,5.2L13.4,6.6L8.7,10.2L6.8,11.4L4.7,12.3L2.5,12.8L0.0,12.9L0.0,12.9L-2.5,12.8L-4.7,12.3L-6.8,11.4L-8.7,10.2L-13.4,6.6L-15.0,5.2L-15.5,4.5L0.0,1.0Z" fill="#fee818"/></g>
<g transform="translate(739.0,575.5) rotate(-25.6)"><path d="M-7.8,-10.2L-6.1,-11.4L-4.2,-12.3L-2.2,-12.8L0.0,-12.9L0.0,-12.9L2.2,-12.8L4.2,-12.3L6.1,-11.4L7.8,-10.2L12.0,-6.6L13.4,-5.2L14.4,-3.6L15.0,-1.9L15.2,0.0L15.2,0.0L15.0,1.9L14.4,3.6L13.4,5.2L12.0,6.6L7.8,10.2L6.1,11.4L4.2,12.3L2.2,12.8L0.0,12.9L0.0,12.9L-2.2,12.8L-4.2,12.3L-6.1,11.4L-7.8,10.2L-12.0,6.6L-13.4,5.2L-14.4,3.6L-15.0,1.9L-15.2,0.0L-15.2,0.0L-15.0,-1.9L-14.4,-3.6L-13.4,-5.2L-12.0,-6.6Z" fill="#dfd826"/><path d="M13.9,4.5L13.4,5.2L12.0,6.6L7.8,10.2L6.1,11.4L4.2,12.3L2.2,12.8L0.0,12.9L0.0,12.9L-2.2,12.8L-4.2,12.3L-6.1,11.4L-7.8,10.2L-12.0,6.6L-13.4,5.2L-13.9,4.5L0.0,1.0Z" fill="#fee818"/></g>
<g transform="translate(442.5,594.8) rotate(33.3)"><path d="M-6.9,-7.8L-5.4,-8.8L-3.7,-9.4L-1.9,-9.8L0.0,-9.9L0.0,-9.9L1.9,-9.8L3.7,-9.4L5.4,-8.8L6.9,-7.8L10.6,-5.1L11.8,-4.0L12.7,-2.8L13.2,-1.4L13.4,0.0L13.4,0.0L13.2,1.4L12.7,2.8L11.8,4.0L10.6,5.1L6.9,7.8L5.4,8.8L3.7,9.4L1.9,9.8L0.0,9.9L0.0,9.9L-1.9,9.8L-3.7,9.4L-5.4,8.8L-6.9,7.8L-10.6,5.1L-11.8,4.0L-12.7,2.8L-13.2,1.4L-13.4,0.0L-13.4,0.0L-13.2,-1.4L-12.7,-2.8L-11.8,-4.0L-10.6,-5.1Z" fill="#dfd826"/><path d="M12.2,3.4L11.8,4.0L10.6,5.1L6.9,7.8L5.4,8.8L3.7,9.4L1.9,9.8L0.0,9.9L0.0,9.9L-1.9,9.8L-3.7,9.4L-5.4,8.8L-6.9,7.8L-10.6,5.1L-11.8,4.0L-12.2,3.4L0.0,0.8Z" fill="#fee818"/></g>
<g transform="translate(476.1,603.3) rotate(18.8)"><path d="M-7.8,-7.8L-6.1,-8.8L-4.3,-9.4L-2.2,-9.8L0.0,-9.9L0.0,-9.9L2.2,-9.8L4.3,-9.4L6.1,-8.8L7.8,-7.8L12.1,-5.1L13.5,-4.0L14.5,-2.8L15.1,-1.4L15.3,0.0L15.3,0.0L15.1,1.4L14.5,2.8L13.5,4.0L12.1,5.1L7.8,7.8L6.1,8.8L4.3,9.4L2.2,9.8L0.0,9.9L0.0,9.9L-2.2,9.8L-4.3,9.4L-6.1,8.8L-7.8,7.8L-12.1,5.1L-13.5,4.0L-14.5,2.8L-15.1,1.4L-15.3,0.0L-15.3,0.0L-15.1,-1.4L-14.5,-2.8L-13.5,-4.0L-12.1,-5.1Z" fill="#dfd826"/><path d="M14.0,3.4L13.5,4.0L12.1,5.1L7.8,7.8L6.1,8.8L4.3,9.4L2.2,9.8L0.0,9.9L0.0,9.9L-2.2,9.8L-4.3,9.4L-6.1,8.8L-7.8,7.8L-12.1,5.1L-13.5,4.0L-14.0,3.4L-0.0,0.8Z" fill="#fee818"/></g>
<g transform="translate(513.5,608.0) rotate(7.7)"><path d="M-8.6,-7.8L-6.7,-8.8L-4.7,-9.4L-2.4,-9.8L0.0,-9.9L0.0,-9.9L2.4,-9.8L4.7,-9.4L6.7,-8.8L8.6,-7.8L13.2,-5.1L14.7,-4.0L15.8,-2.8L16.5,-1.4L16.7,0.0L16.7,0.0L16.5,1.4L15.8,2.8L14.7,4.0L13.2,5.1L8.6,7.8L6.7,8.8L4.7,9.4L2.4,9.8L0.0,9.9L0.0,9.9L-2.4,9.8L-4.7,9.4L-6.7,8.8L-8.6,7.8L-13.2,5.1L-14.7,4.0L-15.8,2.8L-16.5,1.4L-16.7,0.0L-16.7,0.0L-16.5,-1.4L-15.8,-2.8L-14.7,-4.0L-13.2,-5.1Z" fill="#dfd826"/><path d="M15.2,3.4L14.7,4.0L13.2,5.1L8.6,7.8L6.7,8.8L4.7,9.4L2.4,9.8L0.0,9.9L0.0,9.9L-2.4,9.8L-4.7,9.4L-6.7,8.8L-8.6,7.8L-13.2,5.1L-14.7,4.0L-15.2,3.4L0.0,0.8Z" fill="#fee818"/></g>
<g transform="translate(553.6,609.6) rotate(1.5)"><path d="M-9.0,-7.8L-7.0,-8.8L-4.9,-9.4L-2.5,-9.8L0.0,-9.9L0.0,-9.9L2.5,-9.8L4.9,-9.4L7.0,-8.8L9.0,-7.8L13.9,-5.1L15.5,-4.0L16.7,-2.8L17.4,-1.4L17.6,0.0L17.6,0.0L17.4,1.4L16.7,2.8L15.5,4.0L13.9,5.1L9.0,7.8L7.0,8.8L4.9,9.4L2.5,9.8L0.0,9.9L0.0,9.9L-2.5,9.8L-4.9,9.4L-7.0,8.8L-9.0,7.8L-13.9,5.1L-15.5,4.0L-16.7,2.8L-17.4,1.4L-17.6,0.0L-17.6,0.0L-17.4,-1.4L-16.7,-2.8L-15.5,-4.0L-13.9,-5.1Z" fill="#dfd826"/><path d="M16.0,3.4L15.5,4.0L13.9,5.1L9.0,7.8L7.0,8.8L4.9,9.4L2.5,9.8L0.0,9.9L0.0,9.9L-2.5,9.8L-4.9,9.4L-7.0,8.8L-9.0,7.8L-13.9,5.1L-15.5,4.0L-16.0,3.4L0.0,0.8Z" fill="#fee818"/></g>
<g transform="translate(595.0,609.8) rotate(0.0)"><path d="M-9.2,-7.8L-7.2,-8.8L-5.0,-9.4L-2.6,-9.8L0.0,-9.9L0.0,-9.9L2.6,-9.8L5.0,-9.4L7.2,-8.8L9.2,-7.8L14.1,-5.1L15.8,-4.0L16.9,-2.8L17.6,-1.4L17.9,0.0L17.9,0.0L17.6,1.4L16.9,2.8L15.8,4.0L14.1,5.1L9.2,7.8L7.2,8.8L5.0,9.4L2.6,9.8L0.0,9.9L0.0,9.9L-2.6,9.8L-5.0,9.4L-7.2,8.8L-9.2,7.8L-14.1,5.1L-15.8,4.0L-16.9,2.8L-17.6,1.4L-17.9,0.0L-17.9,0.0L-17.6,-1.4L-16.9,-2.8L-15.8,-4.0L-14.1,-5.1Z" fill="#dfd826"/><path d="M16.3,3.4L15.8,4.0L14.1,5.1L9.2,7.8L7.2,8.8L5.0,9.4L2.6,9.8L0.0,9.9L0.0,9.9L-2.6,9.8L-5.0,9.4L-7.2,8.8L-9.2,7.8L-14.1,5.1L-15.8,4.0L-16.3,3.4L0.0,0.8Z" fill="#fee818"/></g>
<g transform="translate(636.4,609.6) rotate(-1.5)"><path d="M-9.0,-7.8L-7.0,-8.8L-4.9,-9.4L-2.5,-9.8L0.0,-9.9L0.0,-9.9L2.5,-9.8L4.9,-9.4L7.0,-8.8L9.0,-7.8L13.9,-5.1L15.5,-4.0L16.7,-2.8L17.4,-1.4L17.6,0.0L17.6,0.0L17.4,1.4L16.7,2.8L15.5,4.0L13.9,5.1L9.0,7.8L7.0,8.8L4.9,9.4L2.5,9.8L0.0,9.9L0.0,9.9L-2.5,9.8L-4.9,9.4L-7.0,8.8L-9.0,7.8L-13.9,5.1L-15.5,4.0L-16.7,2.8L-17.4,1.4L-17.6,0.0L-17.6,0.0L-17.4,-1.4L-16.7,-2.8L-15.5,-4.0L-13.9,-5.1Z" fill="#dfd826"/><path d="M16.0,3.4L15.5,4.0L13.9,5.1L9.0,7.8L7.0,8.8L4.9,9.4L2.5,9.8L0.0,9.9L0.0,9.9L-2.5,9.8L-4.9,9.4L-7.0,8.8L-9.0,7.8L-13.9,5.1L-15.5,4.0L-16.0,3.4L0.0,0.8Z" fill="#fee818"/></g>
<g transform="translate(676.5,608.0) rotate(-7.7)"><path d="M-8.6,-7.8L-6.7,-8.8L-4.7,-9.4L-2.4,-9.8L0.0,-9.9L0.0,-9.9L2.4,-9.8L4.7,-9.4L6.7,-8.8L8.6,-7.8L13.2,-5.1L14.7,-4.0L15.8,-2.8L16.5,-1.4L16.7,0.0L16.7,0.0L16.5,1.4L15.8,2.8L14.7,4.0L13.2,5.1L8.6,7.8L6.7,8.8L4.7,9.4L2.4,9.8L0.0,9.9L0.0,9.9L-2.4,9.8L-4.7,9.4L-6.7,8.8L-8.6,7.8L-13.2,5.1L-14.7,4.0L-15.8,2.8L-16.5,1.4L-16.7,0.0L-16.7,0.0L-16.5,-1.4L-15.8,-2.8L-14.7,-4.0L-13.2,-5.1Z" fill="#dfd826"/><path d="M15.2,3.4L14.7,4.0L13.2,5.1L8.6,7.8L6.7,8.8L4.7,9.4L2.4,9.8L0.0,9.9L0.0,9.9L-2.4,9.8L-4.7,9.4L-6.7,8.8L-8.6,7.8L-13.2,5.1L-14.7,4.0L-15.2,3.4L0.0,0.8Z" fill="#fee818"/></g>
<g transform="translate(713.9,603.3) rotate(-18.8)"><path d="M-7.8,-7.8L-6.1,-8.8L-4.3,-9.4L-2.2,-9.8L0.0,-9.9L0.0,-9.9L2.2,-9.8L4.3,-9.4L6.1,-8.8L7.8,-7.8L12.1,-5.1L13.5,-4.0L14.5,-2.8L15.1,-1.4L15.3,0.0L15.3,0.0L15.1,1.4L14.5,2.8L13.5,4.0L12.1,5.1L7.8,7.8L6.1,8.8L4.3,9.4L2.2,9.8L0.0,9.9L0.0,9.9L-2.2,9.8L-4.3,9.4L-6.1,8.8L-7.8,7.8L-12.1,5.1L-13.5,4.0L-14.5,2.8L-15.1,1.4L-15.3,0.0L-15.3,0.0L-15.1,-1.4L-14.5,-2.8L-13.5,-4.0L-12.1,-5.1Z" fill="#dfd826"/><path d="M14.0,3.4L13.5,4.0L12.1,5.1L7.8,7.8L6.1,8.8L4.3,9.4L2.2,9.8L0.0,9.9L0.0,9.9L-2.2,9.8L-4.3,9.4L-6.1,8.8L-7.8,7.8L-12.1,5.1L-13.5,4.0L-14.0,3.4L-0.0,0.8Z" fill="#fee818"/></g>
<g transform="translate(747.5,594.8) rotate(-33.3)"><path d="M-6.9,-7.8L-5.4,-8.8L-3.7,-9.4L-1.9,-9.8L0.0,-9.9L0.0,-9.9L1.9,-9.8L3.7,-9.4L5.4,-8.8L6.9,-7.8L10.6,-5.1L11.8,-4.0L12.7,-2.8L13.2,-1.4L13.4,0.0L13.4,0.0L13.2,1.4L12.7,2.8L11.8,4.0L10.6,5.1L6.9,7.8L5.4,8.8L3.7,9.4L1.9,9.8L0.0,9.9L0.0,9.9L-1.9,9.8L-3.7,9.4L-5.4,8.8L-6.9,7.8L-10.6,5.1L-11.8,4.0L-12.7,2.8L-13.2,1.4L-13.4,0.0L-13.4,0.0L-13.2,-1.4L-12.7,-2.8L-11.8,-4.0L-10.6,-5.1Z" fill="#dfd826"/><path d="M12.2,3.4L11.8,4.0L10.6,5.1L6.9,7.8L5.4,8.8L3.7,9.4L1.9,9.8L0.0,9.9L0.0,9.9L-1.9,9.8L-3.7,9.4L-5.4,8.8L-6.9,7.8L-10.6,5.1L-11.8,4.0L-12.2,3.4L0.0,0.8Z" fill="#fee818"/></g>
<g transform="translate(435.6,608.8) rotate(40.0)"><path d="M-6.0,-6.1L-4.7,-6.8L-3.3,-7.3L-1.7,-7.6L0.0,-7.7L0.0,-7.7L1.7,-7.6L3.3,-7.3L4.7,-6.8L6.0,-6.1L9.2,-3.9L10.3,-3.1L11.1,-2.1L11.5,-1.1L11.7,0.0L11.7,0.0L11.5,1.1L11.1,2.1L10.3,3.1L9.2,3.9L6.0,6.1L4.7,6.8L3.3,7.3L1.7,7.6L0.0,7.7L0.0,7.7L-1.7,7.6L-3.3,7.3L-4.7,6.8L-6.0,6.1L-9.2,3.9L-10.3,3.1L-11.1,2.1L-11.5,1.1L-11.7,0.0L-11.7,0.0L-11.5,-1.1L-11.1,-2.1L-10.3,-3.1L-9.2,-3.9Z" fill="#dfd826"/><path d="M10.7,2.7L10.3,3.1L9.2,3.9L6.0,6.1L4.7,6.8L3.3,7.3L1.7,7.6L0.0,7.7L0.0,7.7L-1.7,7.6L-3.3,7.3L-4.7,6.8L-6.0,6.1L-9.2,3.9L-10.3,3.1L-10.7,2.7L-0.0,0.6Z" fill="#fee818"/></g>
<g transform="translate(465.3,618.5) rotate(25.2)"><path d="M-7.0,-6.1L-5.5,-6.8L-3.8,-7.3L-2.0,-7.6L0.0,-7.7L0.0,-7.7L2.0,-7.6L3.8,-7.3L5.5,-6.8L7.0,-6.1L10.8,-3.9L12.1,-3.1L13.0,-2.1L13.5,-1.1L13.7,0.0L13.7,0.0L13.5,1.1L13.0,2.1L12.1,3.1L10.8,3.9L7.0,6.1L5.5,6.8L3.8,7.3L2.0,7.6L0.0,7.7L0.0,7.7L-2.0,7.6L-3.8,7.3L-5.5,6.8L-7.0,6.1L-10.8,3.9L-12.1,3.1L-13.0,2.1L-13.5,1.1L-13.7,0.0L-13.7,0.0L-13.5,-1.1L-13.0,-2.1L-12.1,-3.1L-10.8,-3.9Z" fill="#dfd826"/><path d="M12.5,2.7L12.1,3.1L10.8,3.9L7.0,6.1L5.5,6.8L3.8,7.3L2.0,7.6L0.0,7.7L0.0,7.7L-2.0,7.6L-3.8,7.3L-5.5,6.8L-7.0,6.1L-10.8,3.9L-12.1,3.1L-12.5,2.7L-0.0,0.6Z" fill="#fee818"/></g>
<g transform="translate(499.2,624.6) rotate(12.4)"><path d="M-7.8,-6.1L-6.1,-6.8L-4.3,-7.3L-2.2,-7.6L0.0,-7.7L0.0,-7.7L2.2,-7.6L4.3,-7.3L6.1,-6.8L7.8,-6.1L12.1,-3.9L13.5,-3.1L14.5,-2.1L15.1,-1.1L15.3,0.0L15.3,0.0L15.1,1.1L14.5,2.1L13.5,3.1L12.1,3.9L7.8,6.1L6.1,6.8L4.3,7.3L2.2,7.6L0.0,7.7L0.0,7.7L-2.2,7.6L-4.3,7.3L-6.1,6.8L-7.8,6.1L-12.1,3.9L-13.5,3.1L-14.5,2.1L-15.1,1.1L-15.3,0.0L-15.3,0.0L-15.1,-1.1L-14.5,-2.1L-13.5,-3.1L-12.1,-3.9Z" fill="#dfd826"/><path d="M14.0,2.7L13.5,3.1L12.1,3.9L7.8,6.1L6.1,6.8L4.3,7.3L2.2,7.6L0.0,7.7L0.0,7.7L-2.2,7.6L-4.3,7.3L-6.1,6.8L-7.8,6.1L-12.1,3.9L-13.5,3.1L-14.0,2.7L-0.0,0.6Z" fill="#fee818"/></g>
<g transform="translate(536.3,627.4) rotate(3.8)"><path d="M-8.4,-6.1L-6.6,-6.8L-4.6,-7.3L-2.4,-7.6L0.0,-7.7L0.0,-7.7L2.4,-7.6L4.6,-7.3L6.6,-6.8L8.4,-6.1L12.9,-3.9L14.4,-3.1L15.5,-2.1L16.2,-1.1L16.4,0.0L16.4,0.0L16.2,1.1L15.5,2.1L14.4,3.1L12.9,3.9L8.4,6.1L6.6,6.8L4.6,7.3L2.4,7.6L0.0,7.7L0.0,7.7L-2.4,7.6L-4.6,7.3L-6.6,6.8L-8.4,6.1L-12.9,3.9L-14.4,3.1L-15.5,2.1L-16.2,1.1L-16.4,0.0L-16.4,0.0L-16.2,-1.1L-15.5,-2.1L-14.4,-3.1L-12.9,-3.9Z" fill="#dfd826"/><path d="M14.9,2.7L14.4,3.1L12.9,3.9L8.4,6.1L6.6,6.8L4.6,7.3L2.4,7.6L0.0,7.7L0.0,7.7L-2.4,7.6L-4.6,7.3L-6.6,6.8L-8.4,6.1L-12.9,3.9L-14.4,3.1L-14.9,2.7L-0.0,0.6Z" fill="#fee818"/></g>
<g transform="translate(575.2,628.0) rotate(0.3)"><path d="M-8.7,-6.1L-6.8,-6.8L-4.7,-7.3L-2.4,-7.6L0.0,-7.7L0.0,-7.7L2.4,-7.6L4.7,-7.3L6.8,-6.8L8.7,-6.1L13.4,-3.9L14.9,-3.1L16.1,-2.1L16.7,-1.1L17.0,0.0L17.0,0.0L16.7,1.1L16.1,2.1L14.9,3.1L13.4,3.9L8.7,6.1L6.8,6.8L4.7,7.3L2.4,7.6L0.0,7.7L0.0,7.7L-2.4,7.6L-4.7,7.3L-6.8,6.8L-8.7,6.1L-13.4,3.9L-14.9,3.1L-16.1,2.1L-16.7,1.1L-17.0,0.0L-17.0,0.0L-16.7,-1.1L-16.1,-2.1L-14.9,-3.1L-13.4,-3.9Z" fill="#dfd826"/><path d="M15.4,2.7L14.9,3.1L13.4,3.9L8.7,6.1L6.8,6.8L4.7,7.3L2.4,7.6L0.0,7.7L0.0,7.7L-2.4,7.6L-4.7,7.3L-6.8,6.8L-8.7,6.1L-13.4,3.9L-14.9,3.1L-15.4,2.7L-0.0,0.6Z" fill="#fee818"/></g>
<g transform="translate(614.8,628.0) rotate(-0.3)"><path d="M-8.7,-6.1L-6.8,-6.8L-4.7,-7.3L-2.4,-7.6L0.0,-7.7L0.0,-7.7L2.4,-7.6L4.7,-7.3L6.8,-6.8L8.7,-6.1L13.4,-3.9L14.9,-3.1L16.1,-2.1L16.7,-1.1L17.0,0.0L17.0,0.0L16.7,1.1L16.1,2.1L14.9,3.1L13.4,3.9L8.7,6.1L6.8,6.8L4.7,7.3L2.4,7.6L0.0,7.7L0.0,7.7L-2.4,7.6L-4.7,7.3L-6.8,6.8L-8.7,6.1L-13.4,3.9L-14.9,3.1L-16.1,2.1L-16.7,1.1L-17.0,0.0L-17.0,0.0L-16.7,-1.1L-16.1,-2.1L-14.9,-3.1L-13.4,-3.9Z" fill="#dfd826"/><path d="M15.4,2.7L14.9,3.1L13.4,3.9L8.7,6.1L6.8,6.8L4.7,7.3L2.4,7.6L0.0,7.7L0.0,7.7L-2.4,7.6L-4.7,7.3L-6.8,6.8L-8.7,6.1L-13.4,3.9L-14.9,3.1L-15.4,2.7L-0.0,0.6Z" fill="#fee818"/></g>
<g transform="translate(653.7,627.4) rotate(-3.8)"><path d="M-8.4,-6.1L-6.6,-6.8L-4.6,-7.3L-2.4,-7.6L0.0,-7.7L0.0,-7.7L2.4,-7.6L4.6,-7.3L6.6,-6.8L8.4,-6.1L12.9,-3.9L14.4,-3.1L15.5,-2.1L16.2,-1.1L16.4,0.0L16.4,0.0L16.2,1.1L15.5,2.1L14.4,3.1L12.9,3.9L8.4,6.1L6.6,6.8L4.6,7.3L2.4,7.6L0.0,7.7L0.0,7.7L-2.4,7.6L-4.6,7.3L-6.6,6.8L-8.4,6.1L-12.9,3.9L-14.4,3.1L-15.5,2.1L-16.2,1.1L-16.4,0.0L-16.4,0.0L-16.2,-1.1L-15.5,-2.1L-14.4,-3.1L-12.9,-3.9Z" fill="#dfd826"/><path d="M14.9,2.7L14.4,3.1L12.9,3.9L8.4,6.1L6.6,6.8L4.6,7.3L2.4,7.6L0.0,7.7L0.0,7.7L-2.4,7.6L-4.6,7.3L-6.6,6.8L-8.4,6.1L-12.9,3.9L-14.4,3.1L-14.9,2.7L-0.0,0.6Z" fill="#fee818"/></g>
<g transform="translate(690.8,624.6) rotate(-12.4)"><path d="M-7.8,-6.1L-6.1,-6.8L-4.3,-7.3L-2.2,-7.6L0.0,-7.7L0.0,-7.7L2.2,-7.6L4.3,-7.3L6.1,-6.8L7.8,-6.1L12.1,-3.9L13.5,-3.1L14.5,-2.1L15.1,-1.1L15.3,0.0L15.3,0.0L15.1,1.1L14.5,2.1L13.5,3.1L12.1,3.9L7.8,6.1L6.1,6.8L4.3,7.3L2.2,7.6L0.0,7.7L0.0,7.7L-2.2,7.6L-4.3,7.3L-6.1,6.8L-7.8,6.1L-12.1,3.9L-13.5,3.1L-14.5,2.1L-15.1,1.1L-15.3,0.0L-15.3,0.0L-15.1,-1.1L-14.5,-2.1L-13.5,-3.1L-12.1,-3.9Z" fill="#dfd826"/><path d="M14.0,2.7L13.5,3.1L12.1,3.9L7.8,6.1L6.1,6.8L4.3,7.3L2.2,7.6L0.0,7.7L0.0,7.7L-2.2,7.6L-4.3,7.3L-6.1,6.8L-7.8,6.1L-12.1,3.9L-13.5,3.1L-14.0,2.7L-0.0,0.6Z" fill="#fee818"/></g>
<g transform="translate(724.7,618.5) rotate(-25.2)"><path d="M-7.0,-6.1L-5.5,-6.8L-3.8,-7.3L-2.0,-7.6L0.0,-7.7L0.0,-7.7L2.0,-7.6L3.8,-7.3L5.5,-6.8L7.0,-6.1L10.8,-3.9L12.1,-3.1L13.0,-2.1L13.5,-1.1L13.7,0.0L13.7,0.0L13.5,1.1L13.0,2.1L12.1,3.1L10.8,3.9L7.0,6.1L5.5,6.8L3.8,7.3L2.0,7.6L0.0,7.7L0.0,7.7L-2.0,7.6L-3.8,7.3L-5.5,6.8L-7.0,6.1L-10.8,3.9L-12.1,3.1L-13.0,2.1L-13.5,1.1L-13.7,0.0L-13.7,0.0L-13.5,-1.1L-13.0,-2.1L-12.1,-3.1L-10.8,-3.9Z" fill="#dfd826"/><path d="M12.5,2.7L12.1,3.1L10.8,3.9L7.0,6.1L5.5,6.8L3.8,7.3L2.0,7.6L0.0,7.7L0.0,7.7L-2.0,7.6L-3.8,7.3L-5.5,6.8L-7.0,6.1L-10.8,3.9L-12.1,3.1L-12.5,2.7L-0.0,0.6Z" fill="#fee818"/></g>
<g transform="translate(754.4,608.8) rotate(-40.0)"><path d="M-6.0,-6.1L-4.7,-6.8L-3.3,-7.3L-1.7,-7.6L0.0,-7.7L0.0,-7.7L1.7,-7.6L3.3,-7.3L4.7,-6.8L6.0,-6.1L9.2,-3.9L10.3,-3.1L11.1,-2.1L11.5,-1.1L11.7,0.0L11.7,0.0L11.5,1.1L11.1,2.1L10.3,3.1L9.2,3.9L6.0,6.1L4.7,6.8L3.3,7.3L1.7,7.6L0.0,7.7L0.0,7.7L-1.7,7.6L-3.3,7.3L-4.7,6.8L-6.0,6.1L-9.2,3.9L-10.3,3.1L-11.1,2.1L-11.5,1.1L-11.7,0.0L-11.7,0.0L-11.5,-1.1L-11.1,-2.1L-10.3,-3.1L-9.2,-3.9Z" fill="#dfd826"/><path d="M10.7,2.7L10.3,3.1L9.2,3.9L6.0,6.1L4.7,6.8L3.3,7.3L1.7,7.6L0.0,7.7L0.0,7.7L-1.7,7.6L-3.3,7.3L-4.7,6.8L-6.0,6.1L-9.2,3.9L-10.3,3.1L-10.7,2.7L-0.0,0.6Z" fill="#fee818"/></g>
</g></svg>
<div class="abs" style="left:440px;top:441px;width:295px;height:1px;background:#1a1a1a"></div>
</body></html>
